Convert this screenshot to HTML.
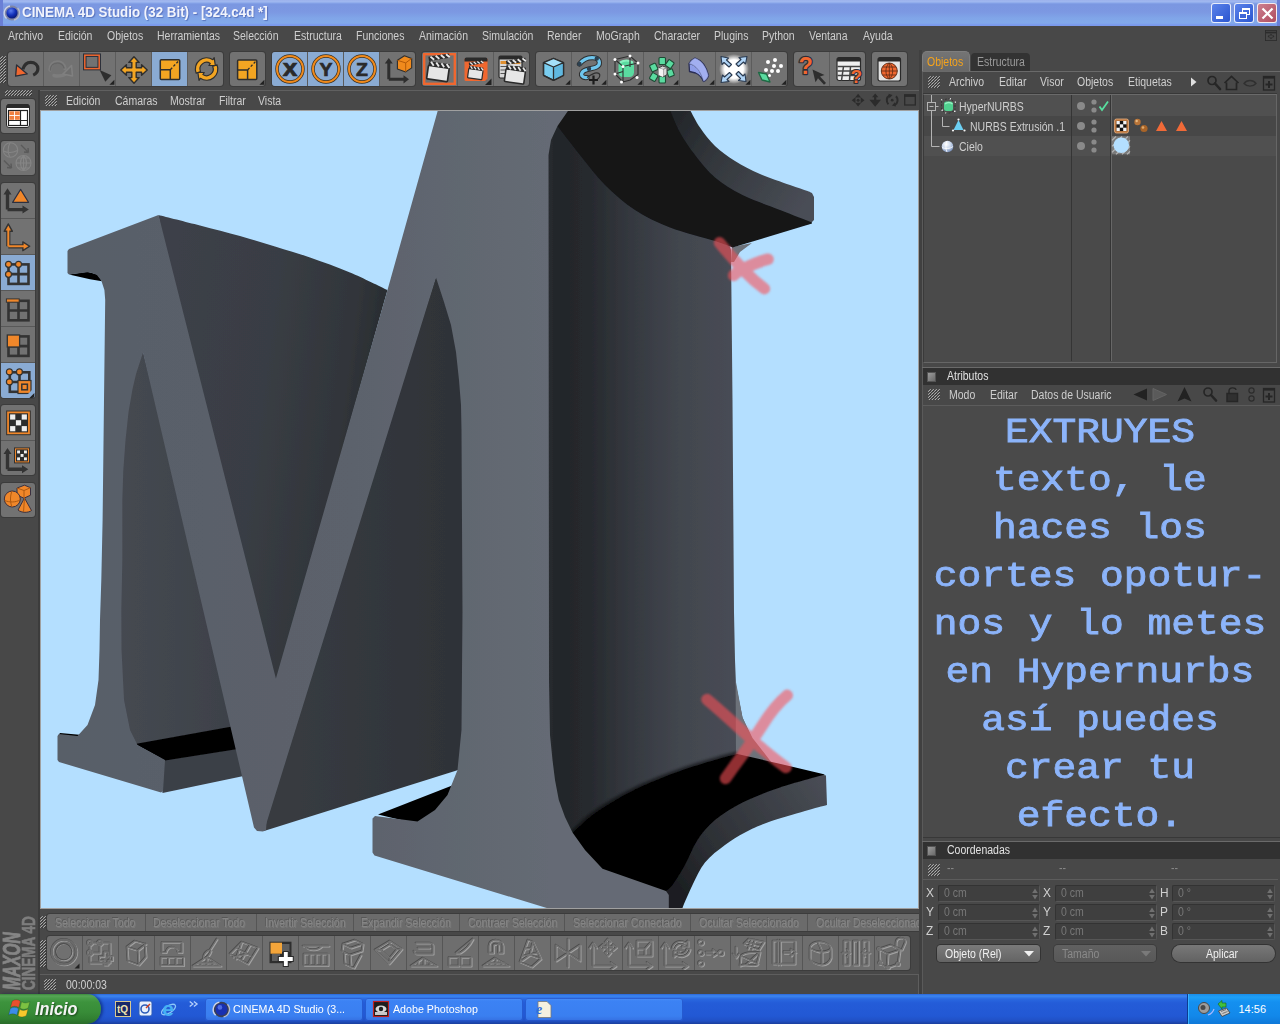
<!DOCTYPE html>
<html lang="es">
<head>
<meta charset="utf-8">
<title>CINEMA 4D Studio (32 Bit) - [324.c4d *]</title>
<style>
*{box-sizing:border-box;margin:0;padding:0}
html,body{width:1280px;height:1024px;overflow:hidden;background:#484848}
body{position:relative;font-family:"Liberation Sans",sans-serif;font-size:12.5px;color:#d6d6d6}
.a{position:absolute}
.t{position:absolute;white-space:nowrap;transform:scaleX(.84);transform-origin:0 50%;line-height:14px;height:14px;color:#cecece}
.dim{color:#858585;text-shadow:none}
.grip{position:absolute;overflow:hidden}
svg{position:absolute;overflow:visible}
/* title bar */
#title{left:0;top:0;width:1280px;height:26px;background:linear-gradient(#9db2ec 0,#a0b9f0 2px,#86a3e8 3px,#7b97e1 4.5px,#7c98e2 12px,#80a5e8 18px,#82a9ea 23px,#7c9cec 24.5px,#7a98ec 26px)}
#title .tt{position:absolute;left:21.5px;top:4px;font:bold 14px "Liberation Sans",sans-serif;color:#f2f4fc;white-space:nowrap;transform:scaleX(.953);transform-origin:0 50%;line-height:17px;text-shadow:1px 1px 1px rgba(40,60,140,.45)}
.wb{position:absolute;top:2.5px;width:20px;height:20px;border:1px solid rgba(255,255,255,.88);border-radius:3px}
/* toolbars */
.grp{position:absolute;top:52px;height:34px;background:#727272;border-radius:3px;box-shadow:0 0 0 1px #3c3c3c}
.b{position:absolute;top:0;height:34px;border-left:1px solid #5c5c5c}
.hl{background:#8aabd3}
.lb{position:absolute;left:1px;width:34px;background:#727272;border-radius:3px;box-shadow:0 0 0 1px #3c3c3c}
</style>
</head>
<body>
<svg width="0" height="0" style="left:0;top:0"><defs><pattern id="gp" width="3" height="3" patternUnits="userSpaceOnUse"><rect width="3" height="3" fill="#3e3e3e"/><path d="M.3 2.500L2.300.5" stroke="#cdcdcd" stroke-width="1" stroke-linecap="square"/></pattern></defs></svg>
<!-- ===== window title bar ===== -->
<div id="title" class="a">
  <div class="a" style="left:0;top:0;width:3px;height:26px;background:#6a7fd6"></div>
  <div class="a" style="left:1277px;top:0;width:3px;height:26px;background:#6a7fd6"></div>
  <svg style="left:4px;top:5px" width="16" height="16" viewBox="0 0 16 16">
    <defs><radialGradient id="ball" cx=".4" cy=".3" r=".8"><stop offset="0" stop-color="#5a7cf0"/><stop offset=".5" stop-color="#1330b8"/><stop offset="1" stop-color="#061060"/></radialGradient></defs>
    <ellipse cx="8" cy="8" rx="7.4" ry="7.4" fill="#7f86a6"/>
    <path d="M2.5 13.5A7.3 7.3 0 0 1 6 1" fill="none" stroke="#d0d4e4" stroke-width="1.3"/>
    <path d="M13.6 3A7.3 7.3 0 0 1 10 15" fill="none" stroke="#b8bccc" stroke-width="1.3"/>
    <circle cx="8" cy="8" r="5.6" fill="url(#ball)"/>
  </svg>
  <span class="tt">CINEMA 4D Studio (32 Bit) - [324.c4d *]</span>
  <div class="wb" style="left:1211px;background:linear-gradient(135deg,#5b83ea,#2a55d0)"><div class="a" style="left:4px;top:12px;width:7px;height:3px;background:#fff"></div></div>
  <div class="wb" style="left:1234px;background:linear-gradient(135deg,#5b83ea,#2a55d0)">
    <div class="a" style="left:7px;top:4px;width:8px;height:7px;border:1px solid #fff;border-top-width:2px"></div>
    <div class="a" style="left:4px;top:8px;width:8px;height:7px;border:1px solid #fff;border-top-width:2px;background:#3d66d8"></div>
  </div>
  <div class="wb" style="left:1257px;background:linear-gradient(135deg,#cc8090,#b04c5e)">
    <svg style="left:3px;top:3px" width="13" height="13" viewBox="0 0 13 13"><path d="M1.5 1.5L11.5 11.5M11.5 1.5L1.5 11.5" stroke="#fff" stroke-width="2.2" fill="none"/></svg>
  </div>
</div>
<!-- ===== main menu ===== -->
<span class="t" style="left:8px;top:29px">Archivo</span>
<span class="t" style="left:58px;top:29px">Edición</span>
<span class="t" style="left:107px;top:29px">Objetos</span>
<span class="t" style="left:157px;top:29px">Herramientas</span>
<span class="t" style="left:233px;top:29px">Selección</span>
<span class="t" style="left:294px;top:29px">Estructura</span>
<span class="t" style="left:356px;top:29px">Funciones</span>
<span class="t" style="left:419px;top:29px">Animación</span>
<span class="t" style="left:482px;top:29px">Simulación</span>
<span class="t" style="left:547px;top:29px">Render</span>
<span class="t" style="left:596px;top:29px">MoGraph</span>
<span class="t" style="left:654px;top:29px">Character</span>
<span class="t" style="left:714px;top:29px">Plugins</span>
<span class="t" style="left:762px;top:29px">Python</span>
<span class="t" style="left:809px;top:29px">Ventana</span>
<span class="t" style="left:863px;top:29px">Ayuda</span>
<svg style="left:1265px;top:29.500px" width="12" height="11" viewBox="0 0 14 13"><rect x=".5" y=".5" width="13" height="12" fill="none" stroke="#2c2c2c"/><path d="M.5 3h13" stroke="#2c2c2c" stroke-width="2"/><path d="M3 7.500l2-2v4zM11 7.500l-2-2v4zM7 4.500l-2 2h4zM7 11l-2-2h4z" fill="#2c2c2c"/></svg>
<!-- ===== main toolbar ===== -->
<svg class="grip" style="left:0px;top:56px" width="6" height="27"><rect width="6" height="27" fill="url(#gp)"/></svg>
<div class="grp" style="left:8px;width:215px">
<div class="b" style="left:0px;width:35px;border-left:0;border-top-left-radius:3px;border-bottom-left-radius:3px;"><svg width="36" height="34" viewBox="0 0 36 34" style="left:-.5px;top:0"><path d="M14.8 17.3C16.3 12.6 19.3 10.4 22.6 10.4C27 10.4 29.9 13.2 29.9 16.8C29.9 19.7 28.2 21.8 25.2 23.1" fill="none" stroke="#2e2e2e" stroke-width="3.2" stroke-linecap="butt"/><path d="M8.6 12.9L7.6 24.2 19.3 21.9z" fill="#f0672f" stroke="#2a2e38" stroke-width="1.3" stroke-linejoin="round"/></svg></div>
<div class="b" style="left:35px;width:36px;"><svg width="36" height="34" viewBox="0 0 36 34" style="left:-.5px;top:0"><g fill="none" stroke-linecap="round"><path d="M6 18c0-5 3-8 7.500-8 4 0 6.500 2.500 7.500 6.500M10 23.500c4 1 8 .5 11-1" stroke="#7d7d7d" stroke-width="3.4"/><path d="M6.5 18c0-4.500 3-7 7-7 3.500 0 5.500 2 6.500 5" stroke="#666" stroke-width="1.4"/><path d="M19 22l8.500-8.500 1 10.500z" fill="#6e6e6e" stroke="#808080" stroke-width="1.6" stroke-linejoin="round"/></g></svg></div>
<div class="b" style="left:71px;width:36px;"><svg width="36" height="34" viewBox="0 0 36 34" style="left:-.5px;top:0"><rect x="4.8" y="3.2" width="14.400" height="13.400" fill="none" stroke="#2a2e38" stroke-width="3.5"/><rect x="4.8" y="3.2" width="14.400" height="13.400" fill="none" stroke="#f0672f" stroke-width="1.5"/><path d="M19.6 18L31.400 23.200 25.300 29.800z" fill="#2e2e2e"/><path d="M29.4 32.8h5v-5z" fill="#222"/></svg></div>
<div class="b" style="left:107px;width:36px;"><svg width="36" height="34" viewBox="0 0 36 34" style="left:-.5px;top:0"><path d="M18 4.8l5.2 5.6h-3v5.400h5.400v-3l5.600 5.200-5.600 5.200v-3h-5.400v5.400h3l-5.200 5.600-5.200-5.600h3v-5.400h-5.400v3l-5.600-5.200 5.600-5.200v3h5.400v-5.400h-3z" fill="#f3a522" stroke="#2e2e2e" stroke-width="1.4" stroke-linejoin="round"/></svg></div>
<div class="b hl" style="left:143px;width:36px;"><svg width="36" height="34" viewBox="0 0 36 34" style="left:-.5px;top:0"><rect x="8.300" y="7.800" width="19.400" height="19.600" rx="1" fill="#f3a522" stroke="#2e2e2e" stroke-width="1.500"/><path d="M8.300 17.800h10v9.600" fill="none" stroke="#2e2e2e" stroke-width="1.500"/><path d="M18.500 17.500l8.500-9" stroke="#2e2e2e" stroke-width="1.300" stroke-dasharray="2.500 1.800"/></svg></div>
<div class="b" style="left:179px;width:36px;border-top-right-radius:3px;border-bottom-right-radius:3px;"><svg width="36" height="34" viewBox="0 0 36 34" style="left:-.5px;top:0"><g stroke="#2e2e2e" stroke-width="1.2" fill="#f3a522" stroke-linejoin="round"><path d="M8.2 21.2A11.2 11.2 0 0 1 24.9 7.7L26.2 5.7L27.3 13.5L20.9 13.5L22.3 11.5A6.6 6.6 0 0 0 12.5 19.5Z"/><path d="M29.0 12.8A11.2 11.2 0 0 1 12.3 26.3L11.0 28.3L9.9 20.5L16.3 20.5L14.9 22.5A6.6 6.6 0 0 0 24.7 14.5Z"/></g></svg></div>
</div>
<div class="grp" style="left:230px;width:35px">
<div class="b" style="left:0px;width:35px;border-left:0;border-top-left-radius:3px;border-bottom-left-radius:3px;border-top-right-radius:3px;border-bottom-right-radius:3px;"><svg width="36" height="34" viewBox="0 0 36 34" style="left:-.5px;top:0"><rect x="7.600" y="8" width="19.200" height="19.500" rx="1" fill="#f3a522" stroke="#2e2e2e" stroke-width="1.500"/><path d="M7.600 18h10v9.500" fill="none" stroke="#2e2e2e" stroke-width="1.500"/><path d="M17.800 17.700l8.500-9" stroke="#2e2e2e" stroke-width="1.300" stroke-dasharray="2.500 1.800"/><path d="M29.4 32.8h5v-5z" fill="#222"/></svg></div>
</div>
<div class="grp" style="left:272px;width:143px">
<div class="b hl" style="left:0px;width:35px;border-left:0;border-top-left-radius:3px;border-bottom-left-radius:3px;"><svg width="36" height="34" viewBox="0 0 36 34" style="left:-.5px;top:0"><circle cx="18" cy="17" r="13" fill="none" stroke="#3a3020" stroke-width="3.4"/><circle cx="18" cy="17" r="13" fill="none" stroke="#f08a1c" stroke-width="2"/><text x="18" y="24" text-anchor="middle" font-family="Liberation Sans,sans-serif" font-weight="bold" font-size="23.5" fill="#2a2a2a" stroke="#2a2a2a" stroke-width=".7" transform="translate(18 0) scale(1.12 1) translate(-18 0)">x</text></svg></div>
<div class="b hl" style="left:35px;width:36px;"><svg width="36" height="34" viewBox="0 0 36 34" style="left:-.5px;top:0"><circle cx="18" cy="17" r="13" fill="none" stroke="#3a3020" stroke-width="3.4"/><circle cx="18" cy="17" r="13" fill="none" stroke="#f08a1c" stroke-width="2"/><text x="18" y="23.6" text-anchor="middle" font-family="Liberation Sans,sans-serif" font-weight="bold" font-size="18.5" fill="#2a2a2a" stroke="#2a2a2a" stroke-width=".7" transform="translate(18 0) scale(1.05 1) translate(-18 0)">Y</text></svg></div>
<div class="b hl" style="left:71px;width:36px;"><svg width="36" height="34" viewBox="0 0 36 34" style="left:-.5px;top:0"><circle cx="18" cy="17" r="13" fill="none" stroke="#3a3020" stroke-width="3.4"/><circle cx="18" cy="17" r="13" fill="none" stroke="#f08a1c" stroke-width="2"/><text x="18" y="23.6" text-anchor="middle" font-family="Liberation Sans,sans-serif" font-weight="bold" font-size="18.5" fill="#2a2a2a" stroke="#2a2a2a" stroke-width=".7" transform="translate(18 0) scale(1.05 1) translate(-18 0)">Z</text></svg></div>
<div class="b" style="left:107px;width:36px;border-top-right-radius:3px;border-bottom-right-radius:3px;"><svg width="36" height="34" viewBox="0 0 36 34" style="left:-.5px;top:0"><path d="M8.800 27.300V9.500M8.800 27.300h16" fill="none" stroke="#2e2e2e" stroke-width="3"/><path d="M4.800 11.500l4-5.500 4 5.500zM23.500 23.200l5.500 4.100-5.500 4.100z" fill="#2e2e2e"/><path d="M17.400 8.300l7-4.600 7.300 2.700v9.500l-6 4-8.300-3z" fill="#f08a1c" stroke="#2e2e2e" stroke-width="1.100" stroke-linejoin="round"/><path d="M17.400 8.300l8.300 2.600 6-4.500M25.700 10.900v9" fill="none" stroke="#b45a08" stroke-width="1"/></svg></div>
</div>
<div class="grp" style="left:422px;width:107px">
<div class="b" style="left:0px;width:35px;border-left:0;border-top-left-radius:3px;border-bottom-left-radius:3px;"><svg width="36" height="34" viewBox="0 0 36 34" style="left:-.5px;top:0"><rect x="2.200" y="2.200" width="30.600" height="29.600" fill="none" stroke="#f0672f" stroke-width="2.400"/><g transform="translate(7.5 6) scale(1.05) rotate(8)"><rect x="0" y="7" width="20" height="13" rx="1" fill="#e6e6e6" stroke="#2a2a2a" stroke-width="1.6"/><rect x="0" y="3.2" width="20" height="4" fill="#2a2a2a"/><path d="M2 3.4l3 3.4M7 3.4l3 3.4M12 3.4l3 3.4M17 3.4l3 3.4" stroke="#e8e8e8" stroke-width="1.8"/><g transform="rotate(-17 0 3)"><rect x="0" y="-1.2" width="20" height="4" fill="#2a2a2a"/><path d="M2 -1l3 3.4M7 -1l3 3.4M12 -1l3 3.4M17 -1l3 3.4" stroke="#e8e8e8" stroke-width="1.8"/></g></g></svg></div>
<div class="b" style="left:35px;width:36px;"><svg width="36" height="34" viewBox="0 0 36 34" style="left:-.5px;top:0"><rect x="6.500" y="6" width="23" height="23" rx="1.500" fill="#f0672f"/><path d="M6.500 9.500v-2a2 2 0 0 1 2-2h19a2 2 0 0 1 2 2v2z" fill="#2a2a2a"/><g transform="translate(11.5 11.5) scale(0.72) rotate(8)"><rect x="0" y="7" width="20" height="13" rx="1" fill="#e6e6e6" stroke="#2a2a2a" stroke-width="1.6"/><rect x="0" y="3.2" width="20" height="4" fill="#2a2a2a"/><path d="M2 3.4l3 3.4M7 3.4l3 3.4M12 3.4l3 3.4M17 3.4l3 3.4" stroke="#e8e8e8" stroke-width="1.8"/><g transform="rotate(-17 0 3)"><rect x="0" y="-1.2" width="20" height="4" fill="#2a2a2a"/><path d="M2 -1l3 3.4M7 -1l3 3.4M12 -1l3 3.4M17 -1l3 3.4" stroke="#e8e8e8" stroke-width="1.8"/></g></g><path d="M27 33h6.500v-6.500z" fill="#222"/><path d="M26.500 29.500h3v-3" fill="#6c6c6c"/></svg></div>
<div class="b" style="left:71px;width:36px;border-top-right-radius:3px;border-bottom-right-radius:3px;"><svg width="36" height="34" viewBox="0 0 36 34" style="left:-.5px;top:0"><rect x="5" y="4" width="23" height="22" rx="1.500" fill="#d8d8d8" stroke="#2a2a2a" stroke-width="1.200"/><path d="M5 7.500v-2a1.500 1.500 0 0 1 1.500-1.500h20a1.500 1.500 0 0 1 1.500 1.500v2z" fill="#2a2a2a"/><rect x="6.500" y="9" width="20" height="3" fill="#e09030"/><path d="M6.500 14.500h20M6.500 18h20M6.500 21.500h20" stroke="#555" stroke-width="1"/><g transform="translate(13 10) scale(0.98) rotate(8)"><rect x="0" y="7" width="20" height="13" rx="1" fill="#e6e6e6" stroke="#2a2a2a" stroke-width="1.6"/><rect x="0" y="3.2" width="20" height="4" fill="#2a2a2a"/><path d="M2 3.4l3 3.4M7 3.4l3 3.4M12 3.4l3 3.4M17 3.4l3 3.4" stroke="#e8e8e8" stroke-width="1.8"/><g transform="rotate(-17 0 3)"><rect x="0" y="-1.2" width="20" height="4" fill="#2a2a2a"/><path d="M2 -1l3 3.4M7 -1l3 3.4M12 -1l3 3.4M17 -1l3 3.4" stroke="#e8e8e8" stroke-width="1.8"/></g></g></svg></div>
</div>
<div class="grp" style="left:536px;width:251px">
<div class="b" style="left:0px;width:35px;border-left:0;border-top-left-radius:3px;border-bottom-left-radius:3px;"><svg width="36" height="34" viewBox="0 0 36 34" style="left:-.5px;top:0"><path d="M17.500 6.500l10 4.200v12.600l-10 5-10-5V10.700z" fill="#79cdf0" stroke="#2e2e2e" stroke-width="1.400" stroke-linejoin="round"/><path d="M7.500 10.700l10 4.300 10-4.300L17.500 6.500z" fill="#a4e0fa"/><path d="M17.500 15v13.300l10-5V10.700z" fill="#60b8e0"/><path d="M7.500 10.700l10 4.300 10-4.300M17.500 15v13.300M17.500 6.500l10 4.200v12.600l-10 5-10-5V10.700z" fill="none" stroke="#2e2e2e" stroke-width="1.300" stroke-linejoin="round"/><path d="M29.4 32.8h5v-5z" fill="#222"/></svg></div>
<div class="b" style="left:35px;width:36px;"><svg width="36" height="34" viewBox="0 0 36 34" style="left:-.5px;top:0"><path d="M7.500 12c4-5 10-7 16-6 5 1.500 5 7 1 9-4 2-10 1.500-13.500 4.500-3 3-1 6.500 4 6" fill="none" stroke="#2e2e2e" stroke-width="5.200" stroke-linecap="round"/><path d="M7.500 12c4-5 10-7 16-6 5 1.500 5 7 1 9-4 2-10 1.500-13.500 4.500-3 3-1 6.500 4 6" fill="none" stroke="#6ec6ee" stroke-width="3.200" stroke-linecap="round"/><path d="M15 25.500c4-3 9-6 12-4 2 2 0 5-2 6" fill="none" stroke="#2e2e2e" stroke-width="1.200"/><circle cx="7.500" cy="12" r="2.200" fill="#2c4050"/><circle cx="24.800" cy="6.500" r="2.200" fill="#2c4050"/><circle cx="17" cy="16.700" r="2.200" fill="#2c4050"/><path d="M21.500 23.500v9M17 28h9" stroke="#1c1c1c" stroke-width="2.200"/><path d="M29.4 32.8h5v-5z" fill="#222"/></svg></div>
<div class="b" style="left:71px;width:36px;"><svg width="36" height="34" viewBox="0 0 36 34" style="left:-.5px;top:0"><rect x="10.500" y="8.500" width="15.500" height="16.500" rx="4.500" fill="#5adba0"/><path d="M12 10.500c4-2.500 9-2.500 13 0" stroke="#8af0c0" stroke-width="2" fill="none"/><path d="M7 7.500l15-3.500 8 7v11.500l-7.800 5.500-7.200 2-8-8zM7 7.500l8 7 15-3.500M15 14.500v15.500M22 4v11M7 22l8-2.500" fill="none" stroke="#2e2e2e" stroke-width="1.100"/><g fill="#fff"><circle cx="7" cy="7.500" r="1.500"/><circle cx="22" cy="4" r="1.500"/><circle cx="30" cy="11" r="1.500"/><circle cx="15" cy="14.500" r="1.500"/><circle cx="7" cy="22" r="1.500"/><circle cx="13.500" cy="30" r="1.500"/><circle cx="29" cy="25.500" r="1.500"/></g><path d="M29.4 32.8h5v-5z" fill="#222"/></svg></div>
<div class="b" style="left:107px;width:36px;"><svg width="36" height="34" viewBox="0 0 36 34" style="left:-.5px;top:0"><g fill="#5adba0" stroke="#1e4a34" stroke-width="1.100" stroke-linejoin="round"><rect x="15" y="5.500" width="6.500" height="7" rx="1"/><rect x="22.500" y="8.500" width="6.500" height="7" rx="1" transform="rotate(35 25.700 12)"/><rect x="23.500" y="17.500" width="6" height="7" rx="1" transform="rotate(-20 26.500 21)"/><rect x="15" y="24" width="6.500" height="7" rx="1"/><rect x="6.500" y="21.500" width="6.500" height="7" rx="1" transform="rotate(30 9.700 25)"/><rect x="6.500" y="12" width="6.500" height="7" rx="1" transform="rotate(-25 9.700 15.500)"/></g><path d="M14.500 16l4-2 4.500 1.500v7l-4 2.500-4.500-2z" fill="#d8d8d8" stroke="#444" stroke-width="1"/><path d="M14.500 16l4.500 1.500 4-2M19 17.500v7.500" fill="none" stroke="#777" stroke-width=".8"/><path d="M14.500 16l4.500 1.500v7.500l-4.500-2z" fill="#f4f4f4"/><path d="M29.4 32.8h5v-5z" fill="#222"/></svg></div>
<div class="b" style="left:143px;width:36px;"><svg width="36" height="34" viewBox="0 0 36 34" style="left:-.5px;top:0"><path d="M9 11.500c1.500-2.500 3.500-4.500 6-5.500 6.500 2 11.500 9 13.500 17.500-1 3-2.500 5-5 6-2-4.500-4.500-7-8-8.500l-6-1.500z" fill="#8f9ee8" stroke="#2a2e55" stroke-width="1.300" stroke-linejoin="round"/><path d="M9 11.500c7 1.500 12 8 14.500 18" fill="none" stroke="#2a2e55" stroke-width="1"/><path d="M9 11.500c1.500-2.500 3.500-4.500 6-5.500 6.500 2 11.500 9 13.500 17.500-1 3-2.500 5-5 6C21 21 16 13.500 9 11.500z" fill="#a9b6f4" opacity=".7"/><path d="M29.4 32.8h5v-5z" fill="#222"/></svg></div>
<div class="b" style="left:179px;width:36px;"><svg width="36" height="34" viewBox="0 0 36 34" style="left:-.5px;top:0"><defs><radialGradient id="gl"><stop offset="0" stop-color="#fff"/><stop offset=".62" stop-color="#fff"/><stop offset="1" stop-color="#fff" stop-opacity="0"/></radialGradient></defs><circle cx="18" cy="17" r="15" fill="url(#gl)"/><g fill="#b0d4f6" stroke="#2a3a50" stroke-width="1.100" stroke-linejoin="round"><path d="M5 4.500l7.500 1.500-2 2 5 4.500-2.500 2.500-5-4.500-2 2z"/><path d="M31 4.500l-1.500 7.500-2-2-5 4.500-2.500-2.500 5-4.500-2-2z"/><path d="M5 30.500l1.500-7.500 2 2 5-4.500 2.500 2.500-5 4.500 2 2z"/><path d="M30 29.500l-7.500-1 2-2-4.500-4.500 2.500-2.500 4.500 4.500 2-2z"/></g><path d="M29.4 32.8h5v-5z" fill="#222"/></svg></div>
<div class="b" style="left:215px;width:36px;border-top-right-radius:3px;border-bottom-right-radius:3px;"><svg width="36" height="34" viewBox="0 0 36 34" style="left:-.5px;top:0"><g fill="#fff"><circle cx="16" cy="10" r="2"/><circle cx="23" cy="8" r="2"/><circle cx="22" cy="14" r="2"/><circle cx="29" cy="14" r="2"/><circle cx="14" cy="18" r="2"/><circle cx="20" cy="19" r="2"/><circle cx="26" cy="19" r="2"/><circle cx="17.500" cy="23.500" r="1.500"/><circle cx="13.500" cy="23.500" r="1.500"/></g><path d="M6.500 20.500l8 1.500 3.500 8-8-2z" fill="#5adba0" stroke="#1e6a44" stroke-width="1.300" stroke-linejoin="round"/><path d="M29.4 32.8h5v-5z" fill="#222"/></svg></div>
</div>
<div class="grp" style="left:794px;width:71px">
<div class="b" style="left:0px;width:35px;border-left:0;border-top-left-radius:3px;border-bottom-left-radius:3px;"><svg width="36" height="34" viewBox="0 0 36 34" style="left:-.5px;top:0"><text x="4.5" y="21.5" font-family="Liberation Sans,sans-serif" font-weight="bold" font-size="23.5" fill="#f0672f" stroke="#2a2e38" stroke-width="2.4" stroke-linejoin="round" paint-order="stroke">?</text><path d="M18.5 17.5l12 5.500-4.500 1.500 6 6.500-2 1.800-6-6.500-2.500 4z" fill="#2e2e2e"/></svg></div>
<div class="b" style="left:35px;width:36px;border-top-right-radius:3px;border-bottom-right-radius:3px;"><svg width="36" height="34" viewBox="0 0 36 34" style="left:-.5px;top:0"><rect x="7" y="5.5" width="23.500" height="23" rx="2" fill="#efefef" stroke="#2a2a2a" stroke-width="1.2"/><path d="M7 9.5v-2.500a1.500 1.500 0 0 1 1.500-1.500h20.500a1.500 1.500 0 0 1 1.500 1.500v2.500z" fill="#2a2a2a"/><path d="M7.5 14.5h22.500M7.500 19h22.500M7.500 23.500h22.500M13.500 14.500l-2 14M20.500 14.500l-1 14" stroke="#444" stroke-width="1.5"/><text x="20.5" y="31" font-family="Liberation Sans,sans-serif" font-weight="bold" font-size="19" fill="#f0672f" stroke="#2a2e38" stroke-width="2.2" stroke-linejoin="round" paint-order="stroke">?</text></svg></div>
</div>
<div class="grp" style="left:872px;width:35px">
<div class="b" style="left:0px;width:35px;border-left:0;border-top-left-radius:3px;border-bottom-left-radius:3px;border-top-right-radius:3px;border-bottom-right-radius:3px;"><svg width="36" height="34" viewBox="0 0 36 34" style="left:-.5px;top:0"><rect x="6" y="5.500" width="22.500" height="23.500" rx="2" fill="#e4e4e4" stroke="#2a2a2a" stroke-width="1.200"/><path d="M6 9.500v-2.500a1.500 1.500 0 0 1 1.500-1.500h19.500a1.500 1.500 0 0 1 1.500 1.500v2.500z" fill="#2a2a2a"/><circle cx="17.300" cy="19" r="8" fill="#f0672f" stroke="#5a2a14" stroke-width=".9"/><path d="M9.300 19h16M17.300 11v16M10.500 15h13.600M10.500 23h13.600M17.300 11c-4.500 3.500-4.500 12.500 0 16M17.300 11c4.500 3.500 4.500 12.500 0 16" fill="none" stroke="#5a2a14" stroke-width=".8"/></svg></div>
</div>
<!-- ===== left mode palette ===== -->
<svg class="grip" style="left:5px;top:90px" width="27" height="6"><rect width="27" height="6" fill="url(#gp)"/></svg>
<div class="lb" style="top:99px;height:34px;overflow:hidden"><div class="a" style="left:0;top:0px;width:34px;height:34px;"><svg width="36" height="36" viewBox="0 0 36 36" style="left:0;top:0.0px"><rect x="5.500" y="5.500" width="23" height="23" rx="2.500" fill="#fff" stroke="#2a2a2a" stroke-width="1"/><path d="M5.500 9v-1.500a2.500 2.500 0 0 1 2.500-2.500h18a2.500 2.500 0 0 1 2.500 2.500v1.500z" fill="#2a2a2a"/><rect x="7.500" y="11.500" width="19" height="15" fill="#fff" stroke="#222" stroke-width="1.200"/><path d="M19.500 11.500v15M7.500 21.500h19" stroke="#222" stroke-width="1.200"/><rect x="8.300" y="12.300" width="4.800" height="3.800" fill="#f08040"/><rect x="14" y="12.300" width="4.800" height="3.800" fill="#f08040"/><rect x="8.300" y="17" width="4.800" height="3.800" fill="#f08040"/><rect x="14" y="17" width="4.800" height="3.800" fill="#f08040"/></svg></div></div>
<div class="lb" style="top:141px;height:34px;overflow:hidden"><div class="a" style="left:0;top:0px;width:34px;height:34px;"><svg width="36" height="36" viewBox="0 0 36 36" style="left:0;top:-1.0px"><g fill="none" stroke="#858585" stroke-width="1.100"><circle cx="9.500" cy="10" r="7.200"/><path d="M2.500 11c4 2 9 2 14-.5M9 3c-2.500 4-2.500 10 0 14"/><circle cx="22.500" cy="23" r="7.500"/><path d="M15 23h15M22.500 15.500v15M17 18h11M17 28h11M22.500 15.500c-4 4-4 11 0 15M22.500 15.500c4 4 4 11 0 15"/><path d="M20 5l6.500 6.500M27.500 12.500l-4.500-.5M27.500 12.500l-.5-4.500M3 20.500l6.500 6.500M10.500 28l-4.500-.5M10.500 28l-.5-4.500" stroke="#5a5a5a" stroke-width="1.400"/></g></svg></div></div>
<div class="lb" style="top:183px;height:214.5px;overflow:hidden"><div class="a" style="left:0;top:0px;width:34px;height:34.5px;"><svg width="36" height="36" viewBox="0 0 36 36" style="left:0;top:-0.8px"><path d="M6.5 27.6V11M6.5 27.6h17.500" fill="none" stroke="#333" stroke-width="3.4"/><path d="M2.5 12.5l4-6.300 4 6.300zM21.500 23.600l6.300 4-6.300 4z" fill="#333"/><path d="M19.6 7.4l8 13h-16z" fill="#f0872a" stroke="#2c3040" stroke-width="1.1" stroke-linejoin="round"/></svg></div><div class="a" style="left:0;top:34.5px;width:34px;height:36px;border-top:1px solid #585858;"><svg width="36" height="36" viewBox="0 0 36 36" style="left:0;top:0.0px"><g transform="translate(.3 -1.2)"><path d="M7 28.5V10M7 28.500h18" fill="none" stroke="#333" stroke-width="4.2"/><path d="M2.8 13.500l4.200-7.500 4.200 7.500zM21.500 24l7 4.500-7 4.500z" fill="#333" stroke="#333" stroke-width="1.2" stroke-linejoin="round"/><path d="M7 28.500V11M7 28.500h17" fill="none" stroke="#f0872a" stroke-width="2"/><path d="M4.300 12.800l2.700-5 2.700 5zM22.300 25.500l4.800 3-4.800 3z" fill="#f0872a"/></g></svg></div><div class="a" style="left:0;top:70.5px;width:34px;height:36px;background:#8aabd3;border-top:1px solid #585858;"><svg width="36" height="36" viewBox="0 0 36 36" style="left:0;top:0.0px"><rect x="7.5" y="9.4" width="20" height="19.5" fill="none" stroke="#333" stroke-width="2.600"/><path d="M17.5 9.4v19.5M7.5 19.15h20" stroke="#333" stroke-width="2.600"/><g fill="#f0872a" stroke="#333" stroke-width="1.2"><circle cx="7.5" cy="9.300" r="3"/><circle cx="17.500" cy="9.300" r="3"/><circle cx="7.500" cy="19.300" r="3"/></g></svg></div><div class="a" style="left:0;top:106.5px;width:34px;height:36px;border-top:1px solid #585858;"><svg width="36" height="36" viewBox="0 0 36 36" style="left:0;top:0.0px"><rect x="7.5" y="9.8" width="20" height="19.5" fill="none" stroke="#333" stroke-width="2.600"/><path d="M17.5 9.8v19.5M7.5 19.55h20" stroke="#333" stroke-width="2.600"/><rect x="5.4" y="7.900" width="12.800" height="3.300" fill="#f0872a" stroke="#333" stroke-width="1"/></svg></div><div class="a" style="left:0;top:142.5px;width:34px;height:36px;border-top:1px solid #585858;"><svg width="36" height="36" viewBox="0 0 36 36" style="left:0;top:0.0px"><rect x="7.5" y="9.4" width="20" height="19.5" fill="none" stroke="#333" stroke-width="2.600"/><path d="M17.5 9.4v19.5M7.5 19.15h20" stroke="#333" stroke-width="2.600"/><rect x="6.3" y="8" width="12.300" height="12" fill="#f0872a" stroke="#333" stroke-width="1.3"/></svg></div><div class="a" style="left:0;top:178.5px;width:34px;height:36px;background:#8aabd3;border-top:1px solid #585858;"><svg width="36" height="36" viewBox="0 0 36 36" style="left:0;top:0.0px"><rect x="8.8" y="9.300" width="19.500" height="19.500" fill="none" stroke="#333" stroke-width="2.6"/><path d="M18.500 9.300v9M8.800 19h9" stroke="#333" stroke-width="2.6"/><g fill="#f0872a" stroke="#333" stroke-width="1.2"><circle cx="8.400" cy="8.900" r="3"/><circle cx="18.400" cy="8.900" r="3"/><circle cx="8.400" cy="18.900" r="3"/></g><rect x="17" y="17.500" width="13" height="13" fill="#f0872a" stroke="#333" stroke-width="1.2"/><rect x="20.800" y="21.200" width="5.600" height="5.600" fill="#f0872a" stroke="#333" stroke-width="1.5"/><path d="M26 32h6v-6z" fill="#8aabd3"/><path d="M28.400 35h5v-5z" fill="#222"/></svg></div></div>
<div class="lb" style="top:405px;height:70px;overflow:hidden"><div class="a" style="left:0;top:0px;width:34px;height:35px;"><svg width="36" height="36" viewBox="0 0 36 36" style="left:0;top:-0.5px"><rect x="5.65" y="6.00" width="23.70" height="23.70" fill="#f0872a" stroke="#333" stroke-width="1"/><rect x="7.95" y="8.30" width="19.10" height="19.10" fill="#2c2c2c"/><rect x="9.1" y="9.4" width="5.2" height="5.2" fill="#eee"/><rect x="9.1" y="21.1" width="5.2" height="5.2" fill="#eee"/><rect x="14.9" y="15.2" width="5.2" height="5.2" fill="#eee"/><rect x="20.7" y="9.4" width="5.2" height="5.2" fill="#eee"/><rect x="20.7" y="21.1" width="5.2" height="5.2" fill="#eee"/></svg></div><div class="a" style="left:0;top:35px;width:34px;height:35px;border-top:1px solid #585858;"><svg width="36" height="36" viewBox="0 0 36 36" style="left:0;top:-0.5px"><path d="M6.5 28.3V11.5M6.500 28.300h17" fill="none" stroke="#333" stroke-width="3.4"/><path d="M2.500 13l4-6 4 6zM21 24.300l6.300 4-6.300 4z" fill="#333"/><rect x="13.50" y="6.90" width="15.00" height="15.00" fill="#f0872a" stroke="#333" stroke-width="1"/><rect x="15.00" y="8.40" width="12.00" height="12.00" fill="#2c2c2c"/><rect x="16.1" y="9.5" width="2.9" height="2.9" fill="#eee"/><rect x="16.1" y="16.4" width="2.9" height="2.9" fill="#eee"/><rect x="19.6" y="13.0" width="2.9" height="2.9" fill="#eee"/><rect x="23.0" y="9.5" width="2.9" height="2.9" fill="#eee"/><rect x="23.0" y="16.4" width="2.9" height="2.9" fill="#eee"/></svg></div></div>
<div class="lb" style="top:483px;height:34px;overflow:hidden"><div class="a" style="left:0;top:0px;width:34px;height:34px;"><svg width="36" height="36" viewBox="0 0 36 36" style="left:0;top:-1.0px"><g fill="#f0872a" stroke="#3a3040" stroke-width="1" stroke-linejoin="round"><path d="M16 6l7.500-2.800 6 2.500v7.500l-6.500 3-7-3z"/><path d="M16 6l7 2.500 6.500-2.800M23 8.500v7.700" fill="none" stroke="#b05a10"/><circle cx="11.300" cy="17" r="8"/><path d="M3.500 18.500c5 2 11 2 15.500-.500M11 9c-2 5-2 11 0 16" fill="none" stroke="#b05a10"/><path d="M23.500 16l7 12.500c-3 2.500-10 2.500-13.500-.500z"/><path d="M23.500 16l-1 14" fill="none" stroke="#b05a10"/></g></svg></div></div>
<div class="a" style="left:38px;top:90px;width:2px;height:904px;background:#3c3c3c"></div>
<!-- ===== 3D viewport ===== -->
<div class="a" style="left:40px;top:110px;width:878.500px;height:799px;background:#a0a0a0"></div>
<svg style="left:41px;top:111px;overflow:hidden" width="876.500" height="797.300" viewBox="41 111 876.500 797.300">
<defs>
<linearGradient id="gF" gradientUnits="userSpaceOnUse" x1="60" y1="0" x2="550" y2="0"><stop offset="0" stop-color="#585e68"/><stop offset=".6" stop-color="#5c626c"/><stop offset="1" stop-color="#656b74"/></linearGradient>
<linearGradient id="gB" gradientUnits="userSpaceOnUse" x1="170" y1="300" x2="400" y2="330"><stop offset="0" stop-color="#3c4048"/><stop offset=".45" stop-color="#393d44"/><stop offset=".8" stop-color="#31353a"/><stop offset="1" stop-color="#25282c"/></linearGradient>
<linearGradient id="gA" gradientUnits="userSpaceOnUse" x1="120" y1="0" x2="235" y2="0"><stop offset="0" stop-color="#454951"/><stop offset="1" stop-color="#3d4149"/></linearGradient>
<linearGradient id="gC" gradientUnits="userSpaceOnUse" x1="300" y1="0" x2="465" y2="0"><stop offset="0" stop-color="#373b41"/><stop offset="1" stop-color="#2e3237"/></linearGradient>
<linearGradient id="gD" gradientUnits="userSpaceOnUse" x1="548" y1="0" x2="736" y2="0"><stop offset="0" stop-color="#2a2d31"/><stop offset=".04" stop-color="#222529"/><stop offset=".22" stop-color="#272a2e"/><stop offset=".45" stop-color="#353940"/><stop offset=".7" stop-color="#42464e"/><stop offset="1" stop-color="#484c55"/></linearGradient>
<linearGradient id="gT" gradientUnits="userSpaceOnUse" x1="670" y1="120" x2="810" y2="205"><stop offset="0" stop-color="#222529"/><stop offset=".35" stop-color="#33373c"/><stop offset="1" stop-color="#4a4e57"/></linearGradient>
<linearGradient id="gS" gradientUnits="userSpaceOnUse" x1="675" y1="890" x2="825" y2="790"><stop offset="0" stop-color="#1b1d20"/><stop offset=".3" stop-color="#2c2f34"/><stop offset="1" stop-color="#484c54"/></linearGradient>
<filter id="soft" x="-5%" y="-5%" width="110%" height="110%"><feGaussianBlur stdDeviation="0.6"/></filter>
<filter id="softx" x="-20%" y="-20%" width="140%" height="140%"><feGaussianBlur stdDeviation="1.1"/></filter>
<filter id="soft2" x="-5%" y="-5%" width="110%" height="110%"><feGaussianBlur stdDeviation="1.6"/></filter>
</defs>
<rect x="40" y="110" width="878" height="799" fill="#b4dfff"/>
<g filter="url(#soft)">
<path d="M158.5 215.0C165.4 216.8 186.4 222.0 200.0 225.5C213.6 229.0 227.5 232.5 240.0 236.0C252.5 239.5 263.3 242.9 275.0 246.5C286.7 250.1 297.5 253.2 310.0 257.5C322.5 261.8 337.1 267.1 350.0 272.5C362.9 277.9 381.2 287.1 387.5 290.0L300 600L276 684L170 300Z" fill="url(#gB)"/>
<path d="M143.0 351.0L115.0 400.0L115.0 740.0L137.5 745.0L240.0 740.0Z" fill="url(#gA)" />
<path d="M436.0 276.0L470.0 330.0L470.0 766.0L455.0 771.0L264.0 831.0L262.0 822.0Z" fill="url(#gC)" />
<path d="M160.0 758.0L240.0 747.0L246.0 775.5L162.5 793.0Z" fill="#3b3f47" />
<path d="M135.0 744.0L232.0 726.5L238.0 749.0L165.0 760.5Z" fill="#040404" />
<path d="M60.0 733.0L82.0 735.0L78.0 737.5L58.0 736.0Z" fill="#040404" />
<path d="M69.0 274.4L87.5 271.8L97.5 274.6L102.0 281.2L90.0 279.2Z" fill="#040404" />
<path d="M545 108L680 108L731 250L732.5 400L734 612L735 660L736 685L742.5 717.5L752.5 740L760 760L700 800L560 840L545 800Z" fill="url(#gD)"/>
<path d="M735.6 680.0L742.5 717.5L752.5 738.0L772.0 763.0L736.0 760.0Z" fill="#6d727a" />
<path d="M732.0 247.0L752.0 243.0L740.0 252.0L734.0 262.0L731.0 262.0Z" fill="#6d727a" />
<path d="M660.0 108.0L690 108L690.0 110.0C691.7 112.9 695.8 121.5 700.0 127.5C704.2 133.5 709.2 140.4 715.0 146.0C720.8 151.6 727.5 156.3 735.0 161.0C742.5 165.7 750.8 170.0 760.0 174.0C769.2 178.0 782.1 182.2 790.0 185.0C797.9 187.8 803.8 189.7 807.5 191.0C811.2 192.3 811.2 192.7 812.0 193.0L814 197L814 220L810 224L780 228L700 180L665 120Z" fill="url(#gT)"/>
<path d="M560 108L557.5 126.0C561.2 130.8 572.1 145.2 580.0 155.0C587.9 164.8 595.8 175.8 605.0 185.0C614.2 194.2 624.2 202.9 635.0 210.0C645.8 217.1 656.7 222.3 670.0 227.5C683.3 232.7 704.6 237.7 715.0 241.0C725.4 244.3 729.6 246.4 732.5 247.5L812 223.5L812.0 222.5C806.7 220.4 791.6 214.6 780.0 210.0C768.4 205.4 753.3 200.4 742.5 195.0C731.7 189.6 722.9 184.2 715.0 177.5C707.1 170.8 700.8 162.5 695.0 155.0C689.2 147.5 684.2 140.0 680.0 132.5C675.8 125.0 671.7 113.8 670.0 110.0L670 108Z" fill="#131518"/>
<path d="M760 760L826 775.5L826.0 776.0L827 805C823.3 806.0 814.9 808.1 805.0 811.0C795.1 813.9 777.5 818.9 767.5 822.5C757.5 826.1 752.1 828.8 745.0 832.5C737.9 836.2 731.7 840.0 725.0 845.0C718.3 850.0 710.4 855.8 705.0 862.5C699.6 869.2 696.2 877.4 692.5 885.0C688.8 892.6 684.2 903.5 682.5 908.0C680.8 912.5 682.1 911.3 682.0 912.0L660 912L660 880Z" fill="url(#gS)"/>
<path d="M572.5 833.0C575.8 830.0 585.0 820.7 592.5 815.0C600.0 809.3 609.2 803.8 617.5 799.0C625.8 794.2 632.1 790.7 642.5 786.0C652.9 781.3 667.1 775.6 680.0 771.0C692.9 766.4 710.4 761.3 720.0 758.5C729.6 755.7 734.6 754.8 737.5 754.0L785 765L825.0 774.5C817.5 776.7 793.8 782.8 780.0 787.5C766.2 792.2 753.3 797.1 742.5 802.5C731.7 807.9 722.5 813.8 715.0 820.0C707.5 826.2 702.5 832.5 697.5 840.0C692.5 847.5 689.2 857.5 685.0 865.0C680.8 872.5 675.7 880.7 672.5 885.0C669.3 889.3 667.1 890.0 666.0 891.0L640 895L590 880L560 830Z" fill="#020203"/>
<path d="M572.5 833.0C575.8 830.0 585.0 820.7 592.5 815.0C600.0 809.3 609.2 803.8 617.5 799.0C625.8 794.2 632.1 790.7 642.5 786.0C652.9 781.3 667.1 775.6 680.0 771.0C692.9 766.4 710.4 761.3 720.0 758.5C729.6 755.7 734.6 754.8 737.5 754.0" fill="none" stroke="#050506" stroke-width="5" stroke-opacity=".55" filter="url(#soft2)"/>
<path d="M378.0 814.5L456.0 784.0L458.0 802.0L422.0 825.0Z" fill="#040404" />
</g>
<g fill="url(#gF)" filter="url(#soft)">
<path d="M69.0 249.0L158.5 215.0L168.0 262.0L143.0 352.5L136.0 374.0L132.5 389.0L128.5 412.0L125.5 440.0L123.3 470.0L122.3 500.0L122.3 560.0L121.3 610.0L121.5 650.0L124.0 700.0L130.0 730.0L137.5 745.0L165.0 760.0L163.0 791.0L161.0 792.5L59.0 762.0L57.5 760.0L57.5 736.0L59.0 734.0L77.5 736.0L87.5 725.0L95.0 705.0L98.5 680.0L99.5 650.0L100.0 620.0L101.3 580.0L102.6 520.0L104.0 400.0L105.2 300.0L104.4 290.0L101.3 280.6L96.9 275.0L92.0 273.0L87.5 272.2L69.0 274.6L67.5 273.0L67.5 251.0Z"/>
<path d="M158.5 215.0L276.5 681.0L266.0 830.0L263.0 831.5L257.0 831.0L254.0 827.5L143.0 352.5L141.0 345.0Z" fill="url(#gF)" />
<path d="M438.5 108.0L387.5 290.0L275.5 680.0L262.0 829.0L264.0 831.0L436.0 277.5L444.0 302.0L451.0 325.0L456.0 352.0L459.0 380.0L461.0 405.0L461.5 430.0L462.5 612.0L461.5 730.0L457.5 770.0L447.5 795.0L435.0 810.0L417.5 821.5L375.0 816.0L372.5 818.5L372.5 852.5L374.5 855.5L550.0 909.0L668.8 909.0L668.8 895.0L666.0 891.0L602.5 868.8L585.0 850.0L572.5 832.5L565.0 817.0L558.8 800.0L555.0 780.0L552.5 760.0L550.0 735.0L549.0 680.0L548.5 155.0L551.0 140.0L557.5 126.0L570.0 108.0Z"/>
</g>
<g fill="none" stroke="#fa5058" stroke-opacity=".58" stroke-width="11.6" stroke-linecap="round" stroke-linejoin="round" filter="url(#softx)">
<path d="M719.6 242.8C727 252 736 262 745 271.5C752 279 758 284 764.4 288.6M768 259.2C759 261.5 749 266 741 270C738 271.5 736 273 733.6 275.4"/>
<path d="M707 699.5C722 712 736 725 749 737C762 749 774 759 786 767.4M787.2 695.4C778 703 770 713 762 726C754 738 749 746 741 757C735 765 730 772 725.6 778.4"/>
</g>
</svg>
<!-- ===== viewport header menu ===== -->
<div class="a" style="left:40px;top:90px;width:879px;height:1px;background:#606060"></div>
<svg class="grip" style="left:45px;top:95px" width="12" height="11"><rect width="12" height="11" fill="url(#gp)"/></svg>
<span class="t" style="left:66px;top:93.500px">Edición</span>
<span class="t" style="left:115px;top:93.500px">Cámaras</span>
<span class="t" style="left:170px;top:93.500px">Mostrar</span>
<span class="t" style="left:219px;top:93.500px">Filtrar</span>
<span class="t" style="left:258px;top:93.500px">Vista</span>
<svg style="left:851px;top:93px" width="66" height="14" viewBox="851 93 66 14" fill="#2b2b2b" stroke="none">
<path d="M858.1 93.8l3 3.800h-6zM858.1 106.600l3-3.800h-6zM851.700 100.200l3.800-3v6zM864.500 100.200l-3.800-3v6z"/><circle cx="858.1" cy="100.200" r="1.500"/>
<path d="M875.2 93.600l3.200 3.600h-2.100v2.600h4.700l-5.800 6.900-5.800-6.900h4.700v-2.600h-2.100z"/>
<g fill="none" stroke="#2b2b2b" stroke-width="2"><path d="M888.4 104.200a5.600 5.600 0 0 1 1.200-8.800"/><path d="M896 96.200a5.600 5.600 0 0 1-1.200 8.800"/></g><path d="M888.5 93.800l4 1.200-3 3.200zM895.900 106.600l-4-1.200 3-3.200z"/><circle cx="892.2" cy="100.200" r="1.400"/>
<rect x="904.700" y="95" width="10.600" height="10" fill="none" stroke="#2b2b2b" stroke-width="1.300"/><rect x="904.100" y="94.300" width="11.800" height="2.600"/>
</svg>
<!-- ===== selection command bar ===== -->
<svg class="grip" style="left:40px;top:916px" width="6" height="12"><rect width="6" height="12" fill="url(#gp)"/></svg>
<div class="a" style="left:47px;top:914px;width:872px;height:17px;background:#6b6b6b;border-radius:3px 0 0 3px;box-shadow:0 0 0 1px #3c3c3c;overflow:hidden">
<span class="t dim" style="left:7.5px;top:1.5px;color:#858585;text-shadow:1px 1px 0 rgba(255,255,255,.10),-1px -1px 0 rgba(0,0,0,.18)">Seleccionar Todo</span>
<div class="a" style="left:98.0px;top:0;width:1px;height:17px;background:#555"></div>
<span class="t dim" style="left:106px;top:1.5px;color:#858585;text-shadow:1px 1px 0 rgba(255,255,255,.10),-1px -1px 0 rgba(0,0,0,.18)">Deseleccionar Todo</span>
<div class="a" style="left:208.5px;top:0;width:1px;height:17px;background:#555"></div>
<span class="t dim" style="left:217.5px;top:1.5px;color:#858585;text-shadow:1px 1px 0 rgba(255,255,255,.10),-1px -1px 0 rgba(0,0,0,.18)">Invertir Selección</span>
<div class="a" style="left:305.5px;top:0;width:1px;height:17px;background:#555"></div>
<span class="t dim" style="left:314px;top:1.5px;color:#858585;text-shadow:1px 1px 0 rgba(255,255,255,.10),-1px -1px 0 rgba(0,0,0,.18)">Expandir Selección</span>
<div class="a" style="left:411.5px;top:0;width:1px;height:17px;background:#555"></div>
<span class="t dim" style="left:420.5px;top:1.5px;color:#858585;text-shadow:1px 1px 0 rgba(255,255,255,.10),-1px -1px 0 rgba(0,0,0,.18)">Contraer Selección</span>
<div class="a" style="left:516.5px;top:0;width:1px;height:17px;background:#555"></div>
<span class="t dim" style="left:525.5px;top:1.5px;color:#858585;text-shadow:1px 1px 0 rgba(255,255,255,.10),-1px -1px 0 rgba(0,0,0,.18)">Seleccionar Conectado</span>
<div class="a" style="left:642.5px;top:0;width:1px;height:17px;background:#555"></div>
<span class="t dim" style="left:651.7px;top:1.5px;color:#858585;text-shadow:1px 1px 0 rgba(255,255,255,.10),-1px -1px 0 rgba(0,0,0,.18)">Ocultar Seleccionado</span>
<div class="a" style="left:759.5px;top:0;width:1px;height:17px;background:#555"></div>
<span class="t dim" style="left:768.5px;top:1.5px;color:#858585;text-shadow:1px 1px 0 rgba(255,255,255,.10),-1px -1px 0 rgba(0,0,0,.18)">Ocultar Deseleccionado</span>
</div>
<!-- ===== modelling tool palette (disabled, embossed) ===== -->
<svg class="grip" style="left:40px;top:940px" width="6" height="27"><rect width="6" height="27" fill="url(#gp)"/></svg>
<div class="a" style="left:47px;top:936px;width:863px;height:34px;background:#6e6e6e;border-radius:3px;box-shadow:0 0 0 1px #3c3c3c;overflow:hidden">
<div class="a" style="left:0px;top:0;width:35px;height:34px;"><svg width="36" height="34" viewBox="0 0 36 34" style="left:-1px;top:0"><g fill="none"><circle cx="18.6" cy="16.6" r="12.3" stroke="#a0a0a0" stroke-width="2.6"/><circle cx="17.6" cy="15.6" r="12.3" stroke="#4c4c4c" stroke-width="2.4"/><circle cx="18" cy="16" r="12.3" stroke="#6a6a6a" stroke-width="2.2"/><circle cx="18.5" cy="16.5" r="8" stroke="#9a9a9a" stroke-width="1.6"/><circle cx="17.600" cy="15.600" r="8" stroke="#505050" stroke-width="1.5"/><circle cx="18" cy="16" r="7.3" fill="#707070" stroke="none"/></g><path d="M28.5 32.5h5v-5z" fill="#222"/></svg></div>
<div class="a" style="left:35px;top:0;width:36px;height:34px;border-left:1px solid #565656;"><svg width="36" height="34" viewBox="0 0 36 34" style="left:-1px;top:0"><g fill="none" stroke-linejoin="round" stroke-linecap="round"><path d="M8 7h20v20h-20zM8 17h10M18 7v10M5.500 7a2.500 2.500 0 1 0 5 0a2.500 2.500 0 1 0-5 0M15.500 7a2.500 2.500 0 1 0 5 0a2.500 2.500 0 1 0-5 0M5.500 17a2.500 2.500 0 1 0 5 0a2.500 2.500 0 1 0-5 0M22 16h4v4.500h4.500v4h-4.500v4.500h-4v-4.500h-4.500v-4h4.500z" stroke="#a2a2a2" stroke-width="1.5" transform="translate(.8 .8)"/><path d="M8 7h20v20h-20zM8 17h10M18 7v10M5.500 7a2.500 2.500 0 1 0 5 0a2.500 2.500 0 1 0-5 0M15.500 7a2.500 2.500 0 1 0 5 0a2.500 2.500 0 1 0-5 0M5.500 17a2.500 2.500 0 1 0 5 0a2.500 2.500 0 1 0-5 0M22 16h4v4.500h4.500v4h-4.500v4.500h-4v-4.500h-4.500v-4h4.500z" stroke="#4c4c4c" stroke-width="1.5" transform="translate(-.6 -.6)"/><path d="M8 7h20v20h-20zM8 17h10M18 7v10M5.500 7a2.500 2.500 0 1 0 5 0a2.500 2.500 0 1 0-5 0M15.500 7a2.500 2.500 0 1 0 5 0a2.500 2.500 0 1 0-5 0M5.500 17a2.500 2.500 0 1 0 5 0a2.500 2.500 0 1 0-5 0M22 16h4v4.500h4.500v4h-4.500v4.500h-4v-4.500h-4.500v-4h4.500z" stroke="#747474" stroke-width="1.3"/></g></svg></div>
<div class="a" style="left:71px;top:0;width:36px;height:34px;border-left:1px solid #565656;"><svg width="36" height="34" viewBox="0 0 36 34" style="left:-1px;top:0"><g fill="none" stroke-linejoin="round" stroke-linecap="round"><path d="M9 11l8-6 10 3 1 13-7 8-11-4zM9 11l11 3.500 8-6.500M20 14.500l1 14.500" stroke="#a2a2a2" stroke-width="1.5" transform="translate(.8 .8)"/><path d="M9 11l8-6 10 3 1 13-7 8-11-4zM9 11l11 3.500 8-6.500M20 14.500l1 14.500" stroke="#4c4c4c" stroke-width="1.5" transform="translate(-.6 -.6)"/><path d="M9 11l8-6 10 3 1 13-7 8-11-4zM9 11l11 3.500 8-6.500M20 14.500l1 14.500" stroke="#747474" stroke-width="1.3"/></g></svg></div>
<div class="a" style="left:107px;top:0;width:36px;height:34px;border-left:1px solid #565656;"><svg width="36" height="34" viewBox="0 0 36 34" style="left:-1px;top:0"><g fill="none" stroke-linejoin="round" stroke-linecap="round"><path d="M8 6.500h20v10h-4c-1-4-3-5.500-6-5.500s-5 1.500-6 5.500h-4zM7 21.500h7.500v8h-7.500zM14.500 21.500h7.500v8h-7.500zM22 21.500h7.500v8h-7.500z" stroke="#a2a2a2" stroke-width="1.5" transform="translate(.8 .8)"/><path d="M8 6.500h20v10h-4c-1-4-3-5.500-6-5.500s-5 1.500-6 5.500h-4zM7 21.500h7.500v8h-7.500zM14.500 21.500h7.500v8h-7.500zM22 21.500h7.500v8h-7.500z" stroke="#4c4c4c" stroke-width="1.5" transform="translate(-.6 -.6)"/><path d="M8 6.500h20v10h-4c-1-4-3-5.500-6-5.500s-5 1.500-6 5.500h-4zM7 21.500h7.500v8h-7.500zM14.500 21.500h7.500v8h-7.500zM22 21.500h7.500v8h-7.500z" stroke="#747474" stroke-width="1.3"/></g></svg></div>
<div class="a" style="left:143px;top:0;width:36px;height:34px;border-left:1px solid #565656;"><svg width="36" height="34" viewBox="0 0 36 34" style="left:-1px;top:0"><g fill="none" stroke-linejoin="round" stroke-linecap="round"><path d="M27 3l-7 11M20 14c-4 1-7 5-6.500 9 3-1 6-3 7.500-8M3 30l14-9 14 9zM11 26v4M17 22.500v7.500M23 26v4M8 27h18" stroke="#a2a2a2" stroke-width="1.5" transform="translate(.8 .8)"/><path d="M27 3l-7 11M20 14c-4 1-7 5-6.500 9 3-1 6-3 7.500-8M3 30l14-9 14 9zM11 26v4M17 22.500v7.500M23 26v4M8 27h18" stroke="#4c4c4c" stroke-width="1.5" transform="translate(-.6 -.6)"/><path d="M27 3l-7 11M20 14c-4 1-7 5-6.500 9 3-1 6-3 7.500-8M3 30l14-9 14 9zM11 26v4M17 22.500v7.500M23 26v4M8 27h18" stroke="#747474" stroke-width="1.3"/></g></svg></div>
<div class="a" style="left:179px;top:0;width:36px;height:34px;border-left:1px solid #565656;"><svg width="36" height="34" viewBox="0 0 36 34" style="left:-1px;top:0"><g fill="none" stroke-linejoin="round" stroke-linecap="round"><path d="M4 18l12-12 16 6-10 16zM10 12l15 8M16 6l-6 17M24 9l-8 14M7 21l16-3" stroke="#a2a2a2" stroke-width="1.5" transform="translate(.8 .8)"/><path d="M4 18l12-12 16 6-10 16zM10 12l15 8M16 6l-6 17M24 9l-8 14M7 21l16-3" stroke="#4c4c4c" stroke-width="1.5" transform="translate(-.6 -.6)"/><path d="M4 18l12-12 16 6-10 16zM10 12l15 8M16 6l-6 17M24 9l-8 14M7 21l16-3" stroke="#747474" stroke-width="1.3"/></g></svg></div>
<div class="a" style="left:215px;top:0;width:36px;height:34px;border-left:1px solid #565656;"><svg width="36" height="34" viewBox="0 0 36 34" style="left:-1px;top:0"><rect x="7.5" y="5.7" width="22" height="21.5" fill="#2e2e2e"/><rect x="19.5" y="8" width="8" height="8" fill="#5f5f5f"/><rect x="10" y="18" width="8" height="7" fill="#5f5f5f"/><rect x="8.5" y="6.7" width="11.5" height="11" fill="#f4a53a"/><path d="M21.3 15.5h5v5h5v5h-5v5h-5v-5h-5v-5h5z" fill="#fff" stroke="#2a2a2a" stroke-width="1.1"/></svg></div>
<div class="a" style="left:251px;top:0;width:36px;height:34px;border-left:1px solid #565656;"><svg width="36" height="34" viewBox="0 0 36 34" style="left:-1px;top:0"><g fill="none" stroke-linejoin="round" stroke-linecap="round"><path d="M5 10h26M7 10c3 5 13 5 17 0M6 18h24v11.500h-24zM12 18v11.500M18 18v11.500M24 18v11.500" stroke="#a2a2a2" stroke-width="1.5" transform="translate(.8 .8)"/><path d="M5 10h26M7 10c3 5 13 5 17 0M6 18h24v11.500h-24zM12 18v11.500M18 18v11.500M24 18v11.500" stroke="#4c4c4c" stroke-width="1.5" transform="translate(-.6 -.6)"/><path d="M5 10h26M7 10c3 5 13 5 17 0M6 18h24v11.500h-24zM12 18v11.500M18 18v11.500M24 18v11.500" stroke="#747474" stroke-width="1.3"/></g></svg></div>
<div class="a" style="left:287px;top:0;width:36px;height:34px;border-left:1px solid #565656;"><svg width="36" height="34" viewBox="0 0 36 34" style="left:-1px;top:0"><g fill="none" stroke-linejoin="round" stroke-linecap="round"><path d="M9 8l12-4 8 4-1 7-12 4-8-4zM10 16l1 12 9 4 7-13M16 19l1 12M9 8l8 4 12-4" stroke="#a2a2a2" stroke-width="1.5" transform="translate(.8 .8)"/><path d="M9 8l12-4 8 4-1 7-12 4-8-4zM10 16l1 12 9 4 7-13M16 19l1 12M9 8l8 4 12-4" stroke="#4c4c4c" stroke-width="1.5" transform="translate(-.6 -.6)"/><path d="M9 8l12-4 8 4-1 7-12 4-8-4zM10 16l1 12 9 4 7-13M16 19l1 12M9 8l8 4 12-4" stroke="#747474" stroke-width="1.3"/></g></svg></div>
<div class="a" style="left:323px;top:0;width:36px;height:34px;border-left:1px solid #565656;"><svg width="36" height="34" viewBox="0 0 36 34" style="left:-1px;top:0"><g fill="none" stroke-linejoin="round" stroke-linecap="round"><path d="M5 14l15-9 12 8-12 14zM11 14l9-5.500 7 5-7 8.500zM5 14l6 0M20 5v3.500M32 13l-5 .5M20 27v-4M6 15l13 13 12-14" stroke="#a2a2a2" stroke-width="1.5" transform="translate(.8 .8)"/><path d="M5 14l15-9 12 8-12 14zM11 14l9-5.500 7 5-7 8.500zM5 14l6 0M20 5v3.500M32 13l-5 .5M20 27v-4M6 15l13 13 12-14" stroke="#4c4c4c" stroke-width="1.5" transform="translate(-.6 -.6)"/><path d="M5 14l15-9 12 8-12 14zM11 14l9-5.500 7 5-7 8.500zM5 14l6 0M20 5v3.500M32 13l-5 .5M20 27v-4M6 15l13 13 12-14" stroke="#747474" stroke-width="1.3"/></g></svg></div>
<div class="a" style="left:359px;top:0;width:36px;height:34px;border-left:1px solid #565656;"><svg width="36" height="34" viewBox="0 0 36 34" style="left:-1px;top:0"><g fill="none" stroke-linejoin="round" stroke-linecap="round"><path d="M10 7h14c2 0 3 1 3 3v8h-16c-2 0-3-1-3-3M12 12h12M5 30l12-8 14 8zM12 26v4M18 23v7M24 26v4" stroke="#a2a2a2" stroke-width="1.5" transform="translate(.8 .8)"/><path d="M10 7h14c2 0 3 1 3 3v8h-16c-2 0-3-1-3-3M12 12h12M5 30l12-8 14 8zM12 26v4M18 23v7M24 26v4" stroke="#4c4c4c" stroke-width="1.5" transform="translate(-.6 -.6)"/><path d="M10 7h14c2 0 3 1 3 3v8h-16c-2 0-3-1-3-3M12 12h12M5 30l12-8 14 8zM12 26v4M18 23v7M24 26v4" stroke="#747474" stroke-width="1.3"/></g></svg></div>
<div class="a" style="left:395px;top:0;width:36px;height:34px;border-left:1px solid #565656;"><svg width="36" height="34" viewBox="0 0 36 34" style="left:-1px;top:0"><g fill="none" stroke-linejoin="round" stroke-linecap="round"><path d="M31 3l-17 14 4 0c5-3 10-8 13-14M7 21.500h10v8.500h-10zM19 21.500h10v8.500h-10z" stroke="#a2a2a2" stroke-width="1.5" transform="translate(.8 .8)"/><path d="M31 3l-17 14 4 0c5-3 10-8 13-14M7 21.500h10v8.500h-10zM19 21.500h10v8.500h-10z" stroke="#4c4c4c" stroke-width="1.5" transform="translate(-.6 -.6)"/><path d="M31 3l-17 14 4 0c5-3 10-8 13-14M7 21.500h10v8.500h-10zM19 21.500h10v8.500h-10z" stroke="#747474" stroke-width="1.3"/></g></svg></div>
<div class="a" style="left:431px;top:0;width:36px;height:34px;border-left:1px solid #565656;"><svg width="36" height="34" viewBox="0 0 36 34" style="left:-1px;top:0"><g fill="none" stroke-linejoin="round" stroke-linecap="round"><path d="M11 17v-7c0-8 14-8 14 0v7h-4.500v-7c0-2.500-5-2.500-5 0v7zM5 30l12-8 14 8zM12 26v4M18 23v7M24 26v4M9 27h18" stroke="#a2a2a2" stroke-width="1.5" transform="translate(.8 .8)"/><path d="M11 17v-7c0-8 14-8 14 0v7h-4.500v-7c0-2.500-5-2.500-5 0v7zM5 30l12-8 14 8zM12 26v4M18 23v7M24 26v4M9 27h18" stroke="#4c4c4c" stroke-width="1.5" transform="translate(-.6 -.6)"/><path d="M11 17v-7c0-8 14-8 14 0v7h-4.500v-7c0-2.500-5-2.500-5 0v7zM5 30l12-8 14 8zM12 26v4M18 23v7M24 26v4M9 27h18" stroke="#747474" stroke-width="1.3"/></g></svg></div>
<div class="a" style="left:467px;top:0;width:36px;height:34px;border-left:1px solid #565656;"><svg width="36" height="34" viewBox="0 0 36 34" style="left:-1px;top:0"><g fill="none" stroke-linejoin="round" stroke-linecap="round"><path d="M14 4l5 2 8 17-9 8-12-5zM14 4l-8 22M19 6l-3 13M16 19l11 4M16 19l-10 7M11 13l7-1M9 20l14-3" stroke="#a2a2a2" stroke-width="1.5" transform="translate(.8 .8)"/><path d="M14 4l5 2 8 17-9 8-12-5zM14 4l-8 22M19 6l-3 13M16 19l11 4M16 19l-10 7M11 13l7-1M9 20l14-3" stroke="#4c4c4c" stroke-width="1.5" transform="translate(-.6 -.6)"/><path d="M14 4l5 2 8 17-9 8-12-5zM14 4l-8 22M19 6l-3 13M16 19l11 4M16 19l-10 7M11 13l7-1M9 20l14-3" stroke="#747474" stroke-width="1.3"/></g></svg></div>
<div class="a" style="left:503px;top:0;width:36px;height:34px;border-left:1px solid #565656;"><svg width="36" height="34" viewBox="0 0 36 34" style="left:-1px;top:0"><g fill="none" stroke-linejoin="round" stroke-linecap="round"><path d="M18 3v28M6 9l12 8-12 8zM30 9l-12 8 12 8z" stroke="#a2a2a2" stroke-width="1.5" transform="translate(.8 .8)"/><path d="M18 3v28M6 9l12 8-12 8zM30 9l-12 8 12 8z" stroke="#4c4c4c" stroke-width="1.5" transform="translate(-.6 -.6)"/><path d="M18 3v28M6 9l12 8-12 8zM30 9l-12 8 12 8z" stroke="#747474" stroke-width="1.3"/></g></svg></div>
<div class="a" style="left:539px;top:0;width:36px;height:34px;border-left:1px solid #565656;"><svg width="36" height="34" viewBox="0 0 36 34" style="left:-1px;top:0"><g fill="none" stroke-linejoin="round" stroke-linecap="round"><path d="M7 30v-21M7 30h22M3.500 12l3.500-5 3.500 5M25 26.500l5 3.500-5 3.500M22 3l3 3.500h-2v4h4v-2l3.500 3-3.500 3v-2h-4v4h2l-3 3.500-3-3.500h2v-4h-4v2l-3.500-3 3.500-3v2h4v-4h-2z" stroke="#a2a2a2" stroke-width="1.5" transform="translate(.8 .8)"/><path d="M7 30v-21M7 30h22M3.500 12l3.500-5 3.500 5M25 26.500l5 3.500-5 3.500M22 3l3 3.500h-2v4h4v-2l3.500 3-3.500 3v-2h-4v4h2l-3 3.500-3-3.500h2v-4h-4v2l-3.500-3 3.500-3v2h4v-4h-2z" stroke="#4c4c4c" stroke-width="1.5" transform="translate(-.6 -.6)"/><path d="M7 30v-21M7 30h22M3.500 12l3.500-5 3.500 5M25 26.500l5 3.500-5 3.500M22 3l3 3.500h-2v4h4v-2l3.500 3-3.500 3v-2h-4v4h2l-3 3.500-3-3.500h2v-4h-4v2l-3.500-3 3.500-3v2h4v-4h-2z" stroke="#747474" stroke-width="1.3"/></g></svg></div>
<div class="a" style="left:575px;top:0;width:36px;height:34px;border-left:1px solid #565656;"><svg width="36" height="34" viewBox="0 0 36 34" style="left:-1px;top:0"><g fill="none" stroke-linejoin="round" stroke-linecap="round"><path d="M7 30v-21M7 30h22M3.500 12l3.500-5 3.500 5M25 26.500l5 3.500-5 3.500M15 5h15v15h-15zM15 13h8v7M23 13l7-8" stroke="#a2a2a2" stroke-width="1.5" transform="translate(.8 .8)"/><path d="M7 30v-21M7 30h22M3.500 12l3.500-5 3.500 5M25 26.500l5 3.500-5 3.500M15 5h15v15h-15zM15 13h8v7M23 13l7-8" stroke="#4c4c4c" stroke-width="1.5" transform="translate(-.6 -.6)"/><path d="M7 30v-21M7 30h22M3.500 12l3.500-5 3.500 5M25 26.500l5 3.500-5 3.500M15 5h15v15h-15zM15 13h8v7M23 13l7-8" stroke="#747474" stroke-width="1.3"/></g></svg></div>
<div class="a" style="left:611px;top:0;width:36px;height:34px;border-left:1px solid #565656;"><svg width="36" height="34" viewBox="0 0 36 34" style="left:-1px;top:0"><g fill="none" stroke-linejoin="round" stroke-linecap="round"><path d="M7 30v-21M7 30h22M3.500 12l3.500-5 3.500 5M25 26.500l5 3.500-5 3.500M14 13a9 9 0 0 1 14-6l2-2v6h-6l2-2a6 6 0 0 0-9 4zM32 13a9 9 0 0 1-14 6l-2 2v-6h6l-2 2a6 6 0 0 0 9-4z" stroke="#a2a2a2" stroke-width="1.5" transform="translate(.8 .8)"/><path d="M7 30v-21M7 30h22M3.500 12l3.500-5 3.500 5M25 26.500l5 3.500-5 3.500M14 13a9 9 0 0 1 14-6l2-2v6h-6l2-2a6 6 0 0 0-9 4zM32 13a9 9 0 0 1-14 6l-2 2v-6h6l-2 2a6 6 0 0 0 9-4z" stroke="#4c4c4c" stroke-width="1.5" transform="translate(-.6 -.6)"/><path d="M7 30v-21M7 30h22M3.500 12l3.500-5 3.500 5M25 26.500l5 3.500-5 3.500M14 13a9 9 0 0 1 14-6l2-2v6h-6l2-2a6 6 0 0 0-9 4zM32 13a9 9 0 0 1-14 6l-2 2v-6h6l-2 2a6 6 0 0 0 9-4z" stroke="#747474" stroke-width="1.3"/></g></svg></div>
<div class="a" style="left:647px;top:0;width:36px;height:34px;border-left:1px solid #565656;"><svg width="36" height="34" viewBox="0 0 36 34" style="left:-1px;top:0"><g fill="none" stroke-linejoin="round" stroke-linecap="round"><path d="M4.500 6.500a2.500 2.500 0 1 0 5 0a2.500 2.500 0 1 0-5 0M4.500 17a2.500 2.500 0 1 0 5 0a2.500 2.500 0 1 0-5 0M4.500 27.500a2.500 2.500 0 1 0 5 0a2.500 2.500 0 1 0-5 0M24.500 17a2.500 2.500 0 1 0 5 0a2.500 2.500 0 1 0-5 0M12 16h7v-2.500l5 3.500-5 3.500v-2.500h-7z" stroke="#a2a2a2" stroke-width="1.5" transform="translate(.8 .8)"/><path d="M4.500 6.500a2.500 2.500 0 1 0 5 0a2.500 2.500 0 1 0-5 0M4.500 17a2.500 2.500 0 1 0 5 0a2.500 2.500 0 1 0-5 0M4.500 27.500a2.500 2.500 0 1 0 5 0a2.500 2.500 0 1 0-5 0M24.500 17a2.500 2.500 0 1 0 5 0a2.500 2.500 0 1 0-5 0M12 16h7v-2.500l5 3.500-5 3.500v-2.500h-7z" stroke="#4c4c4c" stroke-width="1.5" transform="translate(-.6 -.6)"/><path d="M4.500 6.500a2.500 2.500 0 1 0 5 0a2.500 2.500 0 1 0-5 0M4.500 17a2.500 2.500 0 1 0 5 0a2.500 2.500 0 1 0-5 0M4.500 27.500a2.500 2.500 0 1 0 5 0a2.500 2.500 0 1 0-5 0M24.500 17a2.500 2.500 0 1 0 5 0a2.500 2.500 0 1 0-5 0M12 16h7v-2.500l5 3.500-5 3.500v-2.500h-7z" stroke="#747474" stroke-width="1.3"/></g></svg></div>
<div class="a" style="left:683px;top:0;width:36px;height:34px;border-left:1px solid #565656;"><svg width="36" height="34" viewBox="0 0 36 34" style="left:-1px;top:0"><g fill="none" stroke-linejoin="round" stroke-linecap="round"><path d="M14 8l5-5 15 3-5 8zM18 13l3-8M25 4l-3 9M16 6l14 4M11 20c6-6 12-2 19-4l-3 13c-6 2-12-2-17 1zM11 20l17 8M30 16l-14 13M6 11v10M3 18l3 4 3-4" stroke="#a2a2a2" stroke-width="1.5" transform="translate(.8 .8)"/><path d="M14 8l5-5 15 3-5 8zM18 13l3-8M25 4l-3 9M16 6l14 4M11 20c6-6 12-2 19-4l-3 13c-6 2-12-2-17 1zM11 20l17 8M30 16l-14 13M6 11v10M3 18l3 4 3-4" stroke="#4c4c4c" stroke-width="1.5" transform="translate(-.6 -.6)"/><path d="M14 8l5-5 15 3-5 8zM18 13l3-8M25 4l-3 9M16 6l14 4M11 20c6-6 12-2 19-4l-3 13c-6 2-12-2-17 1zM11 20l17 8M30 16l-14 13M6 11v10M3 18l3 4 3-4" stroke="#747474" stroke-width="1.3"/></g></svg></div>
<div class="a" style="left:719px;top:0;width:36px;height:34px;border-left:1px solid #565656;"><svg width="36" height="34" viewBox="0 0 36 34" style="left:-1px;top:0"><g fill="none" stroke-linejoin="round" stroke-linecap="round"><path d="M7 5h22v23h-22zM12 4v25M14.500 4v25M18 15.500h7v-2.500l5 3.500-5 3.500v-2.500h-7z" stroke="#a2a2a2" stroke-width="1.5" transform="translate(.8 .8)"/><path d="M7 5h22v23h-22zM12 4v25M14.500 4v25M18 15.500h7v-2.500l5 3.500-5 3.500v-2.500h-7z" stroke="#4c4c4c" stroke-width="1.5" transform="translate(-.6 -.6)"/><path d="M7 5h22v23h-22zM12 4v25M14.500 4v25M18 15.500h7v-2.500l5 3.500-5 3.500v-2.500h-7z" stroke="#747474" stroke-width="1.3"/></g></svg></div>
<div class="a" style="left:755px;top:0;width:36px;height:34px;border-left:1px solid #565656;"><svg width="36" height="34" viewBox="0 0 36 34" style="left:-1px;top:0"><g fill="none" stroke-linejoin="round" stroke-linecap="round"><path d="M8 12c0-4 6-7 12-6s9 4 9 8v8c-1 4-5 7-9 7s-11-3-12-6zM8 12c4 3 8 4 12 4s7-1 9-3M20 16v13M16 7c2 3 3 6 4 9" stroke="#a2a2a2" stroke-width="1.5" transform="translate(.8 .8)"/><path d="M8 12c0-4 6-7 12-6s9 4 9 8v8c-1 4-5 7-9 7s-11-3-12-6zM8 12c4 3 8 4 12 4s7-1 9-3M20 16v13M16 7c2 3 3 6 4 9" stroke="#4c4c4c" stroke-width="1.5" transform="translate(-.6 -.6)"/><path d="M8 12c0-4 6-7 12-6s9 4 9 8v8c-1 4-5 7-9 7s-11-3-12-6zM8 12c4 3 8 4 12 4s7-1 9-3M20 16v13M16 7c2 3 3 6 4 9" stroke="#747474" stroke-width="1.3"/></g></svg></div>
<div class="a" style="left:791px;top:0;width:36px;height:34px;border-left:1px solid #565656;"><svg width="36" height="34" viewBox="0 0 36 34" style="left:-1px;top:0"><g fill="none" stroke-linejoin="round" stroke-linecap="round"><path d="M6 5h5v24h-5zM15.500 5h5v24h-5zM25 5h5v24h-5zM4 17h8l-3-3.500M4 17h8l-3 3.500M32 17h-8l3-3.500M32 17h-8l3 3.500" stroke="#a2a2a2" stroke-width="1.5" transform="translate(.8 .8)"/><path d="M6 5h5v24h-5zM15.500 5h5v24h-5zM25 5h5v24h-5zM4 17h8l-3-3.500M4 17h8l-3 3.500M32 17h-8l3-3.500M32 17h-8l3 3.500" stroke="#4c4c4c" stroke-width="1.5" transform="translate(-.6 -.6)"/><path d="M6 5h5v24h-5zM15.500 5h5v24h-5zM25 5h5v24h-5zM4 17h8l-3-3.500M4 17h8l-3 3.500M32 17h-8l3-3.500M32 17h-8l3 3.500" stroke="#747474" stroke-width="1.3"/></g></svg></div>
<div class="a" style="left:827px;top:0;width:36px;height:34px;border-left:1px solid #565656;"><svg width="36" height="34" viewBox="0 0 36 34" style="left:-1px;top:0"><g fill="none" stroke-linejoin="round" stroke-linecap="round"><path d="M5 13l12-4 9 5-2 14-11 4-7-5zM5 13l9 5 12-4M14 18l-1 14M22 7c0-3 2-5 5-5s5 2 4 5l-3 7-6-3zM3.500 13a1.500 1.500 0 1 0 3 0a1.500 1.500 0 1 0-3 0M12.500 31.500a1.500 1.500 0 1 0 3 0a1.500 1.500 0 1 0-3 0M4.500 27a1.500 1.500 0 1 0 3 0a1.500 1.500 0 1 0-3 0M22.500 28a1.500 1.500 0 1 0 3 0a1.500 1.500 0 1 0-3 0" stroke="#a2a2a2" stroke-width="1.5" transform="translate(.8 .8)"/><path d="M5 13l12-4 9 5-2 14-11 4-7-5zM5 13l9 5 12-4M14 18l-1 14M22 7c0-3 2-5 5-5s5 2 4 5l-3 7-6-3zM3.500 13a1.500 1.500 0 1 0 3 0a1.500 1.500 0 1 0-3 0M12.500 31.500a1.500 1.500 0 1 0 3 0a1.500 1.500 0 1 0-3 0M4.500 27a1.500 1.500 0 1 0 3 0a1.500 1.500 0 1 0-3 0M22.500 28a1.500 1.500 0 1 0 3 0a1.500 1.500 0 1 0-3 0" stroke="#4c4c4c" stroke-width="1.5" transform="translate(-.6 -.6)"/><path d="M5 13l12-4 9 5-2 14-11 4-7-5zM5 13l9 5 12-4M14 18l-1 14M22 7c0-3 2-5 5-5s5 2 4 5l-3 7-6-3zM3.500 13a1.500 1.500 0 1 0 3 0a1.500 1.500 0 1 0-3 0M12.500 31.500a1.500 1.500 0 1 0 3 0a1.500 1.500 0 1 0-3 0M4.500 27a1.500 1.500 0 1 0 3 0a1.500 1.500 0 1 0-3 0M22.500 28a1.500 1.500 0 1 0 3 0a1.500 1.500 0 1 0-3 0" stroke="#747474" stroke-width="1.3"/></g></svg></div>
</div>
<!-- ===== time / status row ===== -->
<div class="a" style="left:40px;top:974px;width:879px;height:20px;border-top:1px solid #5e5e5e;border-right:1px solid #5e5e5e;background:#474747"></div>
<svg class="grip" style="left:44px;top:979px" width="12" height="11"><rect width="12" height="11" fill="url(#gp)"/></svg>
<span class="t" style="left:65.500px;top:978px;color:#cfcfcf">00:00:03</span>
<!-- ===== vertical brand strip ===== -->
<span class="a" style="left:1.500px;top:990px;white-space:nowrap;transform-origin:0 0;transform:rotate(-90deg) scaleX(.675);font:italic bold 23px 'Liberation Sans',sans-serif;color:#868686;-webkit-text-stroke:.9px #868686;filter:grayscale(1);line-height:20px;height:20px">MAXON</span>
<span class="a" style="left:20.500px;top:990px;white-space:nowrap;transform-origin:0 0;transform:rotate(-90deg) scaleX(.75);font:bold 18px 'Liberation Sans',sans-serif;color:#7e7e7e;-webkit-text-stroke:.6px #7e7e7e;filter:grayscale(1);line-height:17px;height:17px">CINEMA 4D</span>
<!-- ===== object manager ===== -->
<div class="a" style="left:922px;top:51px;width:48px;height:21px;background:linear-gradient(#747474,#676767);border-radius:5px 5px 0 0;border:1px solid #7e7e7e;border-bottom:0"></div>
<span class="t" style="left:927px;top:55px;color:#f5a31c;text-shadow:none">Objetos</span>
<div class="a" style="left:971px;top:53px;width:59px;height:18px;background:#333;border-radius:4px 4px 0 0"></div>
<span class="t" style="left:976.500px;top:55px;color:#9a9a9a;text-shadow:none">Estructura</span>
<div class="a" style="left:922px;top:71px;width:358px;height:1px;background:#6a6a6a"></div>
<div class="a" style="left:922px;top:72px;width:1px;height:922px;background:#5a5a5a"></div>
<div class="a" style="left:919px;top:50px;width:3px;height:944px;background:#404040"></div>
<svg class="grip" style="left:928px;top:76px" width="12" height="12"><rect width="12" height="12" fill="url(#gp)"/></svg>
<span class="t" style="left:949px;top:75px">Archivo</span>
<span class="t" style="left:999px;top:75px">Editar</span>
<span class="t" style="left:1039.5px;top:75px">Visor</span>
<span class="t" style="left:1077px;top:75px">Objetos</span>
<span class="t" style="left:1127.5px;top:75px">Etiquetas</span>
<svg style="left:1188px;top:74px" width="90" height="18" viewBox="0 0 90 18">
<path d="M3 3.500l5.500 4.500-5.500 4.500z" fill="#e0e0e0"/>
<circle cx="24" cy="6.500" r="4" fill="none" stroke="#262626" stroke-width="1.700"/><path d="M27 9.500l5 5.500" stroke="#262626" stroke-width="2.600" stroke-linecap="round"/>
<path d="M36.500 9l7-6.500 7 6.500M38.500 8.500v7h10v-7" fill="none" stroke="#262626" stroke-width="1.700"/>
<path d="M56 9.500c3-4 9-4 12 0-3 3.500-9 3.500-12 0z" fill="none" stroke="#303030" stroke-width="1.300"/>
<rect x="75.500" y="2.500" width="11" height="13.500" fill="none" stroke="#262626" stroke-width="1.300"/><rect x="75" y="2" width="12" height="2.600" fill="#262626"/><path d="M81 7v7M77.500 10.500h7" stroke="#262626" stroke-width="2"/>
</svg>
<div class="a" style="left:923px;top:94px;width:354px;height:269px;background:#4a4a4a;border:1px solid #666;border-top-color:#6a6a6a;border-left-color:#3a3a3a"></div>
<div class="a" style="left:923px;top:93px;width:354px;height:1px;background:#383838"></div>
<div class="a" style="left:924px;top:95px;width:352px;height:21px;background:#505050"></div>
<div class="a" style="left:924px;top:116px;width:352px;height:20px;background:#474747"></div>
<div class="a" style="left:924px;top:136px;width:352px;height:20px;background:#505050"></div>
<div class="a" style="left:1071px;top:95px;width:1px;height:266px;background:#353535"></div>
<div class="a" style="left:1110px;top:95px;width:1px;height:266px;background:#353535"></div>
<div class="a" style="left:1111px;top:95px;width:1px;height:266px;background:#676767"></div>
<svg style="left:924px;top:95px" width="352" height="64" viewBox="924 95 352 64">
<g fill="none" stroke="#b4b4b4" stroke-width="1"><path d="M931.500 95v7M931.500 111v35.500h8M942.500 117v9.500h7"/><rect x="927.500" y="102.500" width="8" height="8"/><path d="M929.500 106.500h4M935.500 106.500h3"/></g>
<!-- hypernurbs icon -->
<rect x="944" y="101.500" width="9" height="9.500" rx="2.500" fill="#4fd08e"/><path d="M945 104c2.500-2 5-2 7.500 0" stroke="#9af0c4" stroke-width="1.300" fill="none"/>
<g fill="#e8e8e8"><rect x="941" y="99" width="1.500" height="1.500"/><rect x="949.500" y="98" width="1.500" height="1.500"/><rect x="954.500" y="101.500" width="1.500" height="1.500"/><rect x="941.500" y="109.500" width="1.500" height="1.500"/><rect x="945" y="112.500" width="1.500" height="1.500"/><rect x="954" y="110.500" width="1.500" height="1.500"/></g>
<path d="M941.500 100l8.500-1.500 5 4v8l-5.500 2.500-4 .5-4-4z" fill="none" stroke="#2a2a2a" stroke-width=".7" stroke-dasharray="2 1.500"/>
<!-- extrude icon -->
<path d="M958.500 120l5 10h-10z" fill="#6cd0f4"/><g fill="#f4f4f4"><circle cx="958.500" cy="119.500" r="1.100"/><circle cx="953" cy="130.500" r="1.100"/><circle cx="964.500" cy="130.500" r="1.100"/></g>
<!-- sky icon -->
<defs><radialGradient id="sk" cx=".4" cy=".3" r=".75"><stop offset="0" stop-color="#fff"/><stop offset=".55" stop-color="#c4d2e8"/><stop offset="1" stop-color="#6c84b0"/></radialGradient></defs>
<circle cx="947.500" cy="146.500" r="5.800" fill="url(#sk)"/><path d="M942 147.500c3 1.500 8 1.500 11-1M947 141c-1.500 3.500-1.500 8 0 11" fill="none" stroke="#fff" stroke-width=".9" opacity=".9"/>
<!-- visibility dots -->
<g fill="#8a8a8a"><circle cx="1081" cy="106" r="4"/><circle cx="1094" cy="102" r="2.6"/><circle cx="1094" cy="110" r="2.6"/>
<circle cx="1081" cy="126" r="4"/><circle cx="1094" cy="122" r="2.6"/><circle cx="1094" cy="130" r="2.6"/>
<circle cx="1081" cy="146" r="4"/><circle cx="1094" cy="142" r="2.6"/><circle cx="1094" cy="150" r="2.6"/></g>
<path d="M1099.500 106.500l2.500 3.500 6-8.500" fill="none" stroke="#58e0a0" stroke-width="1.800"/>
<!-- tags -->
<rect x="1114.500" y="119" width="14" height="14" rx="2" fill="#b8743c" stroke="#e8b080" stroke-width=".8"/><rect x="1116.500" y="121" width="10" height="10" fill="#111"/>
<g fill="#f4f4f4"><rect x="1116.500" y="121" width="3.300" height="3.300"/><rect x="1123.200" y="121" width="3.300" height="3.300"/><rect x="1119.800" y="124.300" width="3.400" height="3.400"/><rect x="1116.500" y="127.700" width="3.300" height="3.300"/><rect x="1123.200" y="127.700" width="3.300" height="3.300"/></g>
<circle cx="1137.500" cy="122" r="3.200" fill="#b87438"/><circle cx="1144" cy="128.500" r="3.600" fill="#a86428"/><circle cx="1136.700" cy="121" r="1.200" fill="#e8b880"/><circle cx="1143" cy="127.500" r="1.300" fill="#e0a868"/>
<path d="M1161.500 121l5.500 10h-11zM1181.500 121l5.500 10h-11z" fill="#f06a38"/>
<rect x="1112" y="136.3" width="18" height="18" fill="#7a7a7a"/><path d="M1112 140.3l4-4M1112 146.3l10-10M1112 152.3l16-16M1116 154.3l14-14M1122 154.3l8-8M1127 154.3l3-3" stroke="#b8b8b8" stroke-width="1.2"/>
<circle cx="1121.3" cy="145.2" r="7.8" fill="#b4dfff"/>
</svg>
<span class="t" style="left:959px;top:100px">HyperNURBS</span>
<span class="t" style="left:970px;top:120px">NURBS Extrusión .1</span>
<span class="t" style="left:959px;top:140px">Cielo</span>
<!-- ===== attribute manager ===== -->
<div class="a" style="left:922px;top:367px;width:358px;height:1px;background:#6a6a6a"></div>
<div class="a" style="left:923px;top:368px;width:357px;height:17px;background:#313131"></div>
<div class="a" style="left:927px;top:371.5px;width:9px;height:10px;background:linear-gradient(135deg,#9c9c9c,#6a6a6a);border:1px solid #555"></div>
<span class="t" style="left:947px;top:368.7px;color:#e2e2e2">Atributos</span>
<svg class="grip" style="left:928px;top:389px" width="12" height="11"><rect width="12" height="11" fill="url(#gp)"/></svg>
<span class="t" style="left:949px;top:388px">Modo</span>
<span class="t" style="left:990px;top:388px">Editar</span>
<span class="t" style="left:1031px;top:388px">Datos de Usuaric</span>
<svg style="left:1130px;top:386px" width="150" height="19" viewBox="1130 386 150 19">
<path d="M1147 388.500v12l-13.500-6z" fill="#222"/><path d="M1153 388.500v12l13.500-6z" fill="#5a5a5a" stroke="#646464" stroke-width="1"/>
<path d="M1184.500 387l7 14.500-7-3-7 3z" fill="#222"/>
<circle cx="1208" cy="392" r="4" fill="none" stroke="#262626" stroke-width="1.700"/><path d="M1211 395l5 5.500" stroke="#262626" stroke-width="2.600" stroke-linecap="round"/>
<rect x="1227" y="393.5" width="10.5" height="8" fill="#303030" stroke="#262626" stroke-width="1.5"/><path d="M1229 393.500v-2.500c0-4 7-4 7-1" fill="none" stroke="#262626" stroke-width="1.400"/>
<circle cx="1251.500" cy="390.500" r="2.600" fill="none" stroke="#2c2c2c" stroke-width="1.200"/><circle cx="1251.500" cy="398.500" r="2.600" fill="none" stroke="#2c2c2c" stroke-width="1.200"/>
<rect x="1263.500" y="388.500" width="11" height="13.500" fill="none" stroke="#262626" stroke-width="1.300"/><rect x="1263" y="388" width="12" height="2.600" fill="#262626"/><path d="M1269 393v7M1265.500 396.500h7" stroke="#262626" stroke-width="2"/>
</svg>
<div class="a" style="left:923px;top:405px;width:357px;height:433px;background:#4a4a4a;border-top:1px solid #5c5c5c;border-bottom:1px solid #383838"></div>
<div class="a" style="left:922px;top:841px;width:358px;height:1px;background:#6a6a6a"></div>
<div class="a" id="note" style="left:922px;top:406px;width:358px;height:432px;text-align:center;font:39.600px 'Liberation Mono',monospace;line-height:48px;color:#8cb4fa;white-space:pre;-webkit-text-stroke:1px #8cb4fa">
<div class="a" style="left:0;width:356px;top:2px;height:48px;transform:scaleY(.875);transform-origin:50% 36.500px">EXTRUYES</div>
<div class="a" style="left:0;width:356px;top:50px;height:48px;transform:scaleY(.875);transform-origin:50% 36.500px">texto, le</div>
<div class="a" style="left:0;width:356px;top:98px;height:48px;transform:scaleY(.875);transform-origin:50% 36.500px">haces los</div>
<div class="a" style="left:0;width:356px;top:146px;height:48px;transform:scaleY(.875);transform-origin:50% 36.500px">cortes opotur-</div>
<div class="a" style="left:0;width:356px;top:194px;height:48px;transform:scaleY(.875);transform-origin:50% 36.500px">nos y lo metes</div>
<div class="a" style="left:0;width:356px;top:242px;height:48px;transform:scaleY(.875);transform-origin:50% 36.500px">en Hypernurbs</div>
<div class="a" style="left:0;width:356px;top:290px;height:48px;transform:scaleY(.875);transform-origin:50% 36.500px">así puedes</div>
<div class="a" style="left:0;width:356px;top:338px;height:48px;transform:scaleY(.875);transform-origin:50% 36.500px">crear tu</div>
<div class="a" style="left:0;width:356px;top:386px;height:48px;transform:scaleY(.875);transform-origin:50% 36.500px">efecto.</div>
</div>
<!-- ===== coordinate manager ===== -->
<div class="a" style="left:923px;top:842px;width:357px;height:17px;background:#313131"></div>
<div class="a" style="left:927px;top:845.5px;width:9px;height:10px;background:linear-gradient(135deg,#9c9c9c,#6a6a6a);border:1px solid #555"></div>
<span class="t" style="left:947px;top:842.7px;color:#e2e2e2">Coordenadas</span>
<svg class="grip" style="left:928px;top:864px" width="12" height="12"><rect width="12" height="12" fill="url(#gp)"/></svg>
<span class="t dim" style="left:947px;top:861px;color:#8a8a8a">--</span>
<span class="t dim" style="left:1059px;top:861px;color:#8a8a8a">--</span>
<span class="t dim" style="left:1171px;top:861px;color:#8a8a8a">--</span>
<div class="a" style="left:923px;top:879px;width:355px;height:1px;background:#5c5c5c"></div>
<span class="t" style="left:925.5px;top:885.5px;color:#d0d0d0;transform:scaleX(.95)">X</span>
<div class="a" style="left:938px;top:884.5px;width:102px;height:17px;background:#3f3f3f;border:1px solid #333;border-bottom-color:#565656;border-right-color:#565656;border-radius:2px"><span class="t dim" style="left:5px;top:.5px;color:#777">0 cm</span><svg style="left:93px;top:2px" width="6" height="12" viewBox="0 0 6 12"><path d="M3 .5l2.800 4.500h-5.600zM3 11.500l2.800-4.500h-5.600z" fill="#707070"/></svg></div>
<span class="t" style="left:1042.5px;top:885.5px;color:#d0d0d0;transform:scaleX(.95)">X</span>
<div class="a" style="left:1055px;top:884.5px;width:102px;height:17px;background:#3f3f3f;border:1px solid #333;border-bottom-color:#565656;border-right-color:#565656;border-radius:2px"><span class="t dim" style="left:5px;top:.5px;color:#777">0 cm</span><svg style="left:93px;top:2px" width="6" height="12" viewBox="0 0 6 12"><path d="M3 .5l2.800 4.500h-5.600zM3 11.500l2.800-4.500h-5.600z" fill="#707070"/></svg></div>
<span class="t" style="left:1160px;top:885.5px;color:#d0d0d0;transform:scaleX(.95)">H</span>
<div class="a" style="left:1172px;top:884.5px;width:103px;height:17px;background:#3f3f3f;border:1px solid #333;border-bottom-color:#565656;border-right-color:#565656;border-radius:2px"><span class="t dim" style="left:5px;top:.5px;color:#777">0 °</span><svg style="left:94px;top:2px" width="6" height="12" viewBox="0 0 6 12"><path d="M3 .5l2.800 4.500h-5.600zM3 11.500l2.800-4.500h-5.600z" fill="#707070"/></svg></div>
<span class="t" style="left:925.5px;top:904.5px;color:#d0d0d0;transform:scaleX(.95)">Y</span>
<div class="a" style="left:938px;top:903.5px;width:102px;height:17px;background:#3f3f3f;border:1px solid #333;border-bottom-color:#565656;border-right-color:#565656;border-radius:2px"><span class="t dim" style="left:5px;top:.5px;color:#777">0 cm</span><svg style="left:93px;top:2px" width="6" height="12" viewBox="0 0 6 12"><path d="M3 .5l2.800 4.500h-5.600zM3 11.500l2.800-4.500h-5.600z" fill="#707070"/></svg></div>
<span class="t" style="left:1042.5px;top:904.5px;color:#d0d0d0;transform:scaleX(.95)">Y</span>
<div class="a" style="left:1055px;top:903.5px;width:102px;height:17px;background:#3f3f3f;border:1px solid #333;border-bottom-color:#565656;border-right-color:#565656;border-radius:2px"><span class="t dim" style="left:5px;top:.5px;color:#777">0 cm</span><svg style="left:93px;top:2px" width="6" height="12" viewBox="0 0 6 12"><path d="M3 .5l2.800 4.500h-5.600zM3 11.500l2.800-4.500h-5.600z" fill="#707070"/></svg></div>
<span class="t" style="left:1160px;top:904.5px;color:#d0d0d0;transform:scaleX(.95)">P</span>
<div class="a" style="left:1172px;top:903.5px;width:103px;height:17px;background:#3f3f3f;border:1px solid #333;border-bottom-color:#565656;border-right-color:#565656;border-radius:2px"><span class="t dim" style="left:5px;top:.5px;color:#777">0 °</span><svg style="left:94px;top:2px" width="6" height="12" viewBox="0 0 6 12"><path d="M3 .5l2.800 4.500h-5.600zM3 11.500l2.800-4.500h-5.600z" fill="#707070"/></svg></div>
<span class="t" style="left:925.5px;top:923.5px;color:#d0d0d0;transform:scaleX(.95)">Z</span>
<div class="a" style="left:938px;top:922.5px;width:102px;height:17px;background:#3f3f3f;border:1px solid #333;border-bottom-color:#565656;border-right-color:#565656;border-radius:2px"><span class="t dim" style="left:5px;top:.5px;color:#777">0 cm</span><svg style="left:93px;top:2px" width="6" height="12" viewBox="0 0 6 12"><path d="M3 .5l2.800 4.500h-5.600zM3 11.500l2.800-4.500h-5.600z" fill="#707070"/></svg></div>
<span class="t" style="left:1042.5px;top:923.5px;color:#d0d0d0;transform:scaleX(.95)">Z</span>
<div class="a" style="left:1055px;top:922.5px;width:102px;height:17px;background:#3f3f3f;border:1px solid #333;border-bottom-color:#565656;border-right-color:#565656;border-radius:2px"><span class="t dim" style="left:5px;top:.5px;color:#777">0 cm</span><svg style="left:93px;top:2px" width="6" height="12" viewBox="0 0 6 12"><path d="M3 .5l2.800 4.500h-5.600zM3 11.500l2.800-4.500h-5.600z" fill="#707070"/></svg></div>
<span class="t" style="left:1160px;top:923.5px;color:#d0d0d0;transform:scaleX(.95)">B</span>
<div class="a" style="left:1172px;top:922.5px;width:103px;height:17px;background:#3f3f3f;border:1px solid #333;border-bottom-color:#565656;border-right-color:#565656;border-radius:2px"><span class="t dim" style="left:5px;top:.5px;color:#777">0 °</span><svg style="left:94px;top:2px" width="6" height="12" viewBox="0 0 6 12"><path d="M3 .5l2.800 4.500h-5.600zM3 11.500l2.800-4.500h-5.600z" fill="#707070"/></svg></div>
<div class="a" style="left:937px;top:945px;width:103px;height:17px;background:linear-gradient(#7a7a7a,#646464);border-radius:4px;box-shadow:0 0 0 1px #333"><span class="t" style="left:8px;top:1.500px;color:#f0f0f0">Objeto (Rel)</span><svg style="left:87px;top:6px" width="10" height="6" viewBox="0 0 10 6"><path d="M0 0h10l-5 5.500z" fill="#f0f0f0"/></svg></div>
<div class="a" style="left:1054px;top:945px;width:102px;height:17px;background:linear-gradient(#606060,#585858);border-radius:4px;box-shadow:0 0 0 1px #3c3c3c"><span class="t dim" style="left:8px;top:1.500px;color:#8a8a8a">Tamaño</span><svg style="left:87px;top:6px" width="10" height="6" viewBox="0 0 10 6"><path d="M0 0h10l-5 5.500z" fill="#7a7a7a"/></svg></div>
<div class="a" style="left:1172px;top:945px;width:103px;height:17px;background:linear-gradient(#787878,#626262);border-radius:9px;box-shadow:0 0 0 1px #333"><span class="t" style="left:34px;top:2px;color:#f0f0f0">Aplicar</span></div>
<!-- ===== Windows taskbar ===== -->
<div class="a" style="left:0;top:994px;width:1280px;height:30px;background:linear-gradient(#2a66d8 0,#3c86f0 2px,#2a68e0 5px,#245cd8 9px,#2258d4 22px,#2050c4 27px,#1a3e9c 30px);font-family:'Liberation Sans',sans-serif;font-size:11.500px;color:#fff">
<div class="a" style="left:0;top:0;width:101px;height:30px;background:linear-gradient(#3c8a3c 0,#56a656 2px,#4a9e4a 4px,#3d933d 8px,#388c38 18px,#317f31 25px,#2a6c2a 30px);border-radius:0 14px 14px 0/0 15px 15px 0;box-shadow:2px 0 3px rgba(0,20,80,.5)"></div>
<svg style="left:9px;top:4px" width="24" height="24" viewBox="1 3 19 19"><g stroke="rgba(0,0,0,.25)" stroke-width=".5"><path d="M3.500 5.500c2-1.500 4.500-1.500 6.500 0l-1.300 5c-2-1.300-4.500-1.300-6.500 0z" fill="#e8502c"/><path d="M11 6c2 1.300 4.500 1.300 6.500-.200l-1.300 5c-2 1.500-4.500 1.500-6.500.200z" fill="#7cc242"/><path d="M2 11.500c2-1.500 4.500-1.500 6.500 0l-1.300 5c-2-1.300-4.500-1.300-6.500 0z" fill="#3c8ce8"/><path d="M9.500 12c2 1.300 4.500 1.300 6.500-.200l-1.300 5c-2 1.500-4.500 1.500-6.500.200z" fill="#f8c82c"/></g></svg>
<span class="a" style="left:35px;top:5px;font:italic bold 17.500px 'Liberation Sans',sans-serif;color:#f4f4f4;text-shadow:1px 1px 2px rgba(0,0,0,.5);transform:scaleX(.93);transform-origin:0 0;line-height:20px;white-space:nowrap">Inicio</span>
<svg style="left:113px;top:4px" width="90" height="22" viewBox="113 998 90 22">
<rect x="115.500" y="1001.500" width="15" height="15" fill="#16286a" stroke="#d8c890" stroke-width="1"/><text x="117" y="1013" font-family="Liberation Sans,sans-serif" font-weight="bold" font-size="10" fill="#f0e4b0">tQ</text>
<rect x="139" y="1001" width="13" height="15" rx="2" fill="#e8f0fc" stroke="#2c5cb8" stroke-width="1"/><circle cx="145" cy="1009" r="4" fill="none" stroke="#2c5cb8" stroke-width="1.600"/><path d="M146 1008l4-4" stroke="#d04020" stroke-width="1.500"/>
<ellipse cx="168.5" cy="1009.5" rx="8" ry="3.6" fill="none" stroke="#8cc8f8" stroke-width="1.3" transform="rotate(-32 168.5 1009.5)"/><text x="162.3" y="1016.4" font-family="Liberation Sans,sans-serif" font-weight="bold" font-size="21" fill="#46b0f4">e</text>
<path d="M189.7 1001.4l3.200 2.600-3.200 2.600M193.900 1001.400l3.200 2.600-3.200 2.600" fill="none" stroke="#b4d0fc" stroke-width="1.3"/>
</svg>
<div class="a" style="left:205px;top:4px;width:158px;height:23px;background:linear-gradient(#4c90f8 0,#3c82f4 3px,#3a7ff0 18px,#356fe0 23px);border-radius:3px;box-shadow:inset 0 0 0 1px rgba(20,60,180,.55)"><svg style="left:8px;top:3px" width="17" height="17" viewBox="0 0 16 16"><ellipse cx="8" cy="8" rx="7.300" ry="7.300" fill="#3a3f55"/><path d="M2.500 13.500A7.300 7.300 0 0 1 6 1" fill="none" stroke="#d0d4e4" stroke-width="1.300"/><path d="M13.600 3A7.300 7.300 0 0 1 10 15" fill="none" stroke="#b8bccc" stroke-width="1.300"/><circle cx="8" cy="8" r="5.600" fill="#1830b0"/><circle cx="6.500" cy="6" r="2.200" fill="#5a7cf0" opacity=".8"/></svg><span class="a" style="left:28px;top:5px;line-height:13px;white-space:nowrap;font-size:11px;transform:scaleX(.97);transform-origin:0 50%">CINEMA 4D Studio (3...</span></div>
<div class="a" style="left:365px;top:4px;width:158px;height:23px;background:linear-gradient(#4c90f8 0,#3c82f4 3px,#3a7ff0 18px,#356fe0 23px);border-radius:3px;box-shadow:inset 0 0 0 1px rgba(20,60,180,.55)"><svg style="left:8px;top:3px" width="17" height="17" viewBox="0 0 17 17"><rect x=".5" y=".5" width="15" height="15" fill="#1c1c1c" stroke="#c02020" stroke-width="1.200"/><ellipse cx="8" cy="8" rx="5.500" ry="3.500" fill="#d8d8d8"/><circle cx="8" cy="8" r="2.200" fill="#222"/><rect x="2" y="11" width="12" height="3" fill="#c8c8c8"/></svg><span class="a" style="left:28px;top:5px;line-height:13px;white-space:nowrap;font-size:11px;transform:scaleX(.97);transform-origin:0 50%">Adobe Photoshop</span></div>
<div class="a" style="left:525px;top:4px;width:158px;height:23px;background:linear-gradient(#4c90f8 0,#3c82f4 3px,#3a7ff0 18px,#356fe0 23px);border-radius:3px;box-shadow:inset 0 0 0 1px rgba(20,60,180,.55)"><svg style="left:10px;top:2px" width="18" height="19" viewBox="0 0 18 19"><path d="M3 1.500h9l4 4v12h-13z" fill="#f4f0e0" stroke="#777" stroke-width=".8"/><text x="1" y="14" font-family="Liberation Serif,serif" font-style="italic" font-weight="bold" font-size="14" fill="#2c6ce0">e</text></svg><span class="a" style="left:28px;top:5px;line-height:13px;white-space:nowrap;font-size:11px;transform:scaleX(.97);transform-origin:0 50%"></span></div>
<div class="a" style="left:1187px;top:0;width:93px;height:30px;background:linear-gradient(#1a8ce8 0,#1ea0f8 3px,#1490f0 8px,#1288ea 22px,#0f78d8 30px);border-left:1px solid #0c3c90;box-shadow:inset 1px 0 0 #38b0ff"></div>
<svg style="left:1195px;top:4px" width="40" height="22" viewBox="1195 998 40 22">
<circle cx="1204" cy="1008" r="5.500" fill="#9c9c9c" stroke="#484848" stroke-width="1"/><circle cx="1203" cy="1007.500" r="2.500" fill="#484848"/><path d="M1208 1015c3-1 5-3 6-6" stroke="#a8b8ff" stroke-width="1.200" fill="none"/>
<path d="M1218 1004l4-3.500v2.500h4v4h-4v2z" fill="#40c040" stroke="#186018" stroke-width=".6"/><path d="M1218.500 1011l8-3 3.500 5-8 3.500z" fill="#c8c8c8" stroke="#404040" stroke-width=".8"/><path d="M1221 1011.500l5-2M1222.500 1013.500l5-2" stroke="#505050" stroke-width=".7"/>
</svg>
<span class="a" style="left:1238.500px;top:9px;line-height:13px;white-space:nowrap;font-size:11px">14:56</span>
</div>
</body>
</html>
